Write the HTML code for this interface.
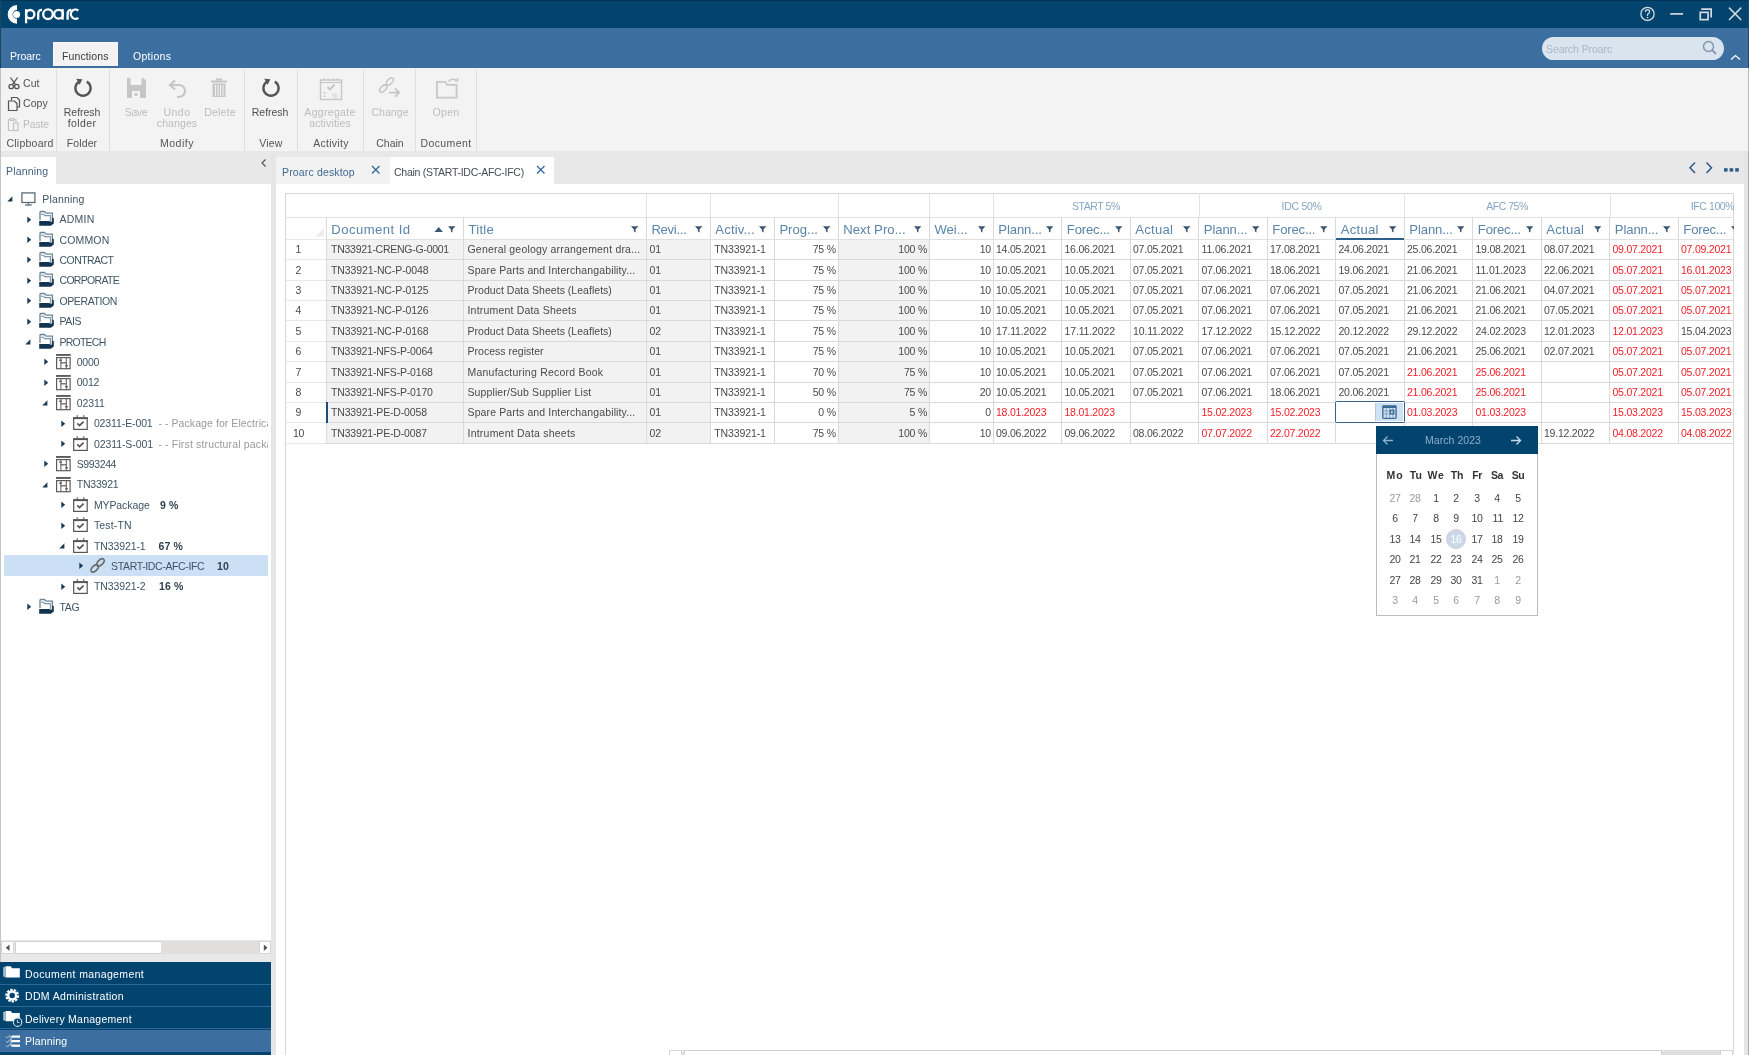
<!DOCTYPE html><html><head><meta charset="utf-8"><style>
html,body{margin:0;padding:0;}
body{width:1749px;height:1055px;overflow:hidden;position:relative;background:#fff;font-family:"Liberation Sans", sans-serif;}
.t{position:absolute;white-space:nowrap;line-height:1;}
body>div,body>svg{will-change:transform;}
.r{position:absolute;}
svg{position:absolute;overflow:visible;}
</style></head><body>
<div class="r" style="left:0px;top:0px;width:1749px;height:28px;background:#03446f;"></div>
<div class="r" style="left:0px;top:0px;width:1749px;height:1px;background:#023456;"></div>
<svg style="left:0;top:0" width="90" height="28">
<path d="M17 5.1 A9.3 9.3 0 0 0 17 23.7 L17 18.8 A4.4 4.4 0 0 1 17 10 Z" fill="#fff"/>
<circle cx="16.6" cy="14.4" r="3.5" fill="#fff"/>
<g fill="none" stroke="#fff" stroke-width="2.3">
<path d="M26.1 9.2 V23.3"/><circle cx="30.2" cy="14.2" r="4.2"/>
<path d="M38.2 19.7 V14.3 Q38.2 9.9 42 9.9"/>
<circle cx="48" cy="14.2" r="4.8"/>
<circle cx="58.6" cy="14.2" r="4.4"/><path d="M62.6 9.1 V19.7"/>
<path d="M67.6 19.7 V14.3 Q67.6 9.9 71.3 9.9"/>
<path d="M78.3 10.6 A4.6 4.6 0 1 0 78.3 17.8"/>
</g>
</svg>
<svg style="left:1636px;top:4px" width="110" height="22">
<g fill="none" stroke="#d3dae1">
<circle cx="11.5" cy="9.9" r="6.6" stroke-width="1.3"/>
<path d="M9.4 7.9 Q9.4 5.7 11.5 5.7 Q13.6 5.7 13.6 7.8 Q13.6 9.3 11.6 10.3 V12" stroke-width="1.2"/>
<line x1="34.2" y1="9.9" x2="47.1" y2="9.9" stroke-width="1.7"/>
<rect x="64.25" y="8.35" width="7.8" height="7.3" stroke-width="1.7"/>
<path d="M65.2 5.15 H75.15 V13.5" stroke-width="1.7"/>
<path d="M93 3.6 L105.2 16 M105.2 3.6 L93 16" stroke-width="1.5"/>
</g>
<circle cx="11.6" cy="13.6" r="0.8" fill="#d3dae1"/>
</svg>
<div class="r" style="left:0px;top:28px;width:1749px;height:40px;background:#3c6f9f;"></div>
<div class="r" style="left:0px;top:0px;width:1px;height:68px;background:#1f4460;"></div>
<div class="r" style="left:53.4px;top:41.8px;width:64.8px;height:24.3px;background:#f2f2f2;border:1px solid #fbf8f6;border-bottom:none;box-sizing:border-box;"></div>
<div class="t" style="left:10.00px;top:50.91px;font-size:10.5px;color:#fff;letter-spacing:-0.022px;">Proarc</div>
<div class="t" style="left:62.40px;top:50.91px;font-size:10.5px;color:#3a3a3a;letter-spacing:0.117px;">Functions</div>
<div class="t" style="left:132.60px;top:50.91px;font-size:10.5px;color:#fff;letter-spacing:0.301px;">Options</div>
<div class="r" style="left:1542px;top:37px;width:182px;height:23px;background:#d9e4ee;border-radius:11.5px;"></div>
<div class="t" style="left:1546.00px;top:43.71px;font-size:10.5px;color:#a8b8c8;letter-spacing:-0.078px;">Search Proarc</div>
<svg style="left:1700px;top:39px" width="20" height="18">
<circle cx="8.5" cy="7.5" r="5" fill="none" stroke="#7f97ae" stroke-width="1.5"/>
<line x1="12" y1="11" x2="16" y2="15" stroke="#7f97ae" stroke-width="1.8"/>
</svg>
<svg style="left:1728px;top:52px" width="16" height="10">
<path d="M3 7.5 L7.5 3.5 L12 7.5" fill="none" stroke="#fff" stroke-width="1.3"/>
</svg>
<div class="r" style="left:0px;top:68px;width:1749px;height:83px;background:#f3f3f3;"></div>
<div class="r" style="left:0px;top:68px;width:1px;height:83px;background:#c2c2c2;"></div>
<div class="r" style="left:55.5px;top:68.5px;width:1px;height:82px;background:#dedede;"></div>
<div class="r" style="left:108.5px;top:68.5px;width:1px;height:82px;background:#dedede;"></div>
<div class="r" style="left:243.5px;top:68.5px;width:1px;height:82px;background:#dedede;"></div>
<div class="r" style="left:296.5px;top:68.5px;width:1px;height:82px;background:#dedede;"></div>
<div class="r" style="left:363px;top:68.5px;width:1px;height:82px;background:#dedede;"></div>
<div class="r" style="left:415px;top:68.5px;width:1px;height:82px;background:#dedede;"></div>
<div class="r" style="left:476px;top:68.5px;width:1px;height:82px;background:#dedede;"></div>
<svg style="left:7px;top:76px" width="16" height="56">
<g fill="none" stroke="#555" stroke-width="1.3">
<circle cx="4.2" cy="10.5" r="2.2"/><circle cx="9.8" cy="10.5" r="2.2"/>
<path d="M5.5 8.6 L10.5 1.5 M8.5 8.6 L3.5 1.5"/>
</g>
<g fill="none" stroke="#555" stroke-width="1.2">
<path d="M4.5 24.5 V21.5 H10 L12.5 24 V31 H10"/>
<path d="M1.5 25 H7.5 L10 27.5 V34.5 H1.5 Z"/>
</g>
<g fill="none" stroke="#c4c4c4" stroke-width="1.2">
<path d="M3 43.5 H1.5 V54.5 H6"/><path d="M7.5 43.5 H9 V46"/><rect x="3.5" y="42.5" width="3.5" height="2"/>
<rect x="6.5" y="47" width="4.5" height="7.5"/>
</g>
</svg>
<div class="t" style="left:23.00px;top:78.31px;font-size:10.5px;color:#505050;letter-spacing:0.1px;">Cut</div>
<div class="t" style="left:23.00px;top:97.91px;font-size:10.5px;color:#505050;letter-spacing:0.094px;">Copy</div>
<div class="t" style="left:23.00px;top:118.51px;font-size:10.5px;color:#bcbcbc;letter-spacing:-0.208px;">Paste</div>
<div class="t" style="left:-270.38px;width:600px;text-align:center;top:138.41px;font-size:10.5px;color:#555;letter-spacing:0.237px;">Clipboard</div>
<svg style="left:73px;top:78px" width="20" height="20">
<path d="M6.2 3.6 A7.6 7.6 0 1 0 13.8 3.6" fill="none" stroke="#555" stroke-width="2.4"/>
<path d="M3.2 0.8 L9.4 1.2 L6.6 6.8 Z" fill="#555"/>
</svg>
<div class="t" style="left:-218.03px;width:600px;text-align:center;top:106.61px;font-size:10.5px;color:#505050;letter-spacing:-0.065px;">Refresh</div>
<div class="t" style="left:-217.80px;width:600px;text-align:center;top:118.11px;font-size:10.5px;color:#505050;letter-spacing:0.408px;">folder</div>
<div class="t" style="left:-217.95px;width:600px;text-align:center;top:138.41px;font-size:10.5px;color:#555;letter-spacing:0.091px;">Folder</div>
<svg style="left:126px;top:77px" width="22" height="22">
<path d="M1 1 H17.5 L20 3.5 V21 H1 Z" fill="#c6c6c6"/>
<rect x="4.5" y="1" width="11" height="7" fill="#f3f3f3"/>
<rect x="6" y="14" width="8" height="7" fill="#f3f3f3"/>
<rect x="8.5" y="16" width="3" height="3" fill="#c6c6c6"/>
</svg>
<div class="t" style="left:-163.68px;width:600px;text-align:center;top:106.61px;font-size:10.5px;color:#bcbcbc;letter-spacing:-0.364px;">Save</div>
<svg style="left:167px;top:79px" width="22" height="20">
<path d="M4 6 H12 A6 6 0 0 1 12 18 H10" fill="none" stroke="#c6c6c6" stroke-width="2.2"/>
<path d="M8 1.5 L3 6 L8 10.5" fill="none" stroke="#c6c6c6" stroke-width="2.2"/>
</svg>
<div class="t" style="left:-122.78px;width:600px;text-align:center;top:106.61px;font-size:10.5px;color:#bcbcbc;letter-spacing:0.431px;">Undo</div>
<div class="t" style="left:-122.95px;width:600px;text-align:center;top:118.11px;font-size:10.5px;color:#bcbcbc;letter-spacing:0.093px;">changes</div>
<svg style="left:210px;top:78px" width="20" height="20">
<rect x="1" y="2.5" width="16" height="2" fill="#c6c6c6"/>
<rect x="6" y="0.5" width="6" height="2" fill="#c6c6c6"/>
<path d="M2.5 5.5 H15.5 V19 H2.5 Z" fill="#c6c6c6"/>
<g stroke="#f3f3f3" stroke-width="1"><line x1="5.5" y1="7" x2="5.5" y2="18"/><line x1="8" y1="7" x2="8" y2="18"/><line x1="10.5" y1="7" x2="10.5" y2="18"/><line x1="13" y1="7" x2="13" y2="18"/></g>
</svg>
<div class="t" style="left:-80.41px;width:600px;text-align:center;top:106.61px;font-size:10.5px;color:#bcbcbc;letter-spacing:0.186px;">Delete</div>
<div class="t" style="left:-122.75px;width:600px;text-align:center;top:138.41px;font-size:10.5px;color:#555;letter-spacing:0.502px;">Modify</div>
<svg style="left:261px;top:78px" width="20" height="20">
<path d="M6.2 3.6 A7.6 7.6 0 1 0 13.8 3.6" fill="none" stroke="#555" stroke-width="2.4"/>
<path d="M3.2 0.8 L9.4 1.2 L6.6 6.8 Z" fill="#555"/>
</svg>
<div class="t" style="left:-29.53px;width:600px;text-align:center;top:106.61px;font-size:10.5px;color:#505050;letter-spacing:-0.065px;">Refresh</div>
<div class="t" style="left:-29.41px;width:600px;text-align:center;top:138.41px;font-size:10.5px;color:#555;letter-spacing:0.171px;">View</div>
<svg style="left:319px;top:77px" width="24" height="24">
<rect x="1.5" y="3" width="21" height="19.5" fill="none" stroke="#c6c6c6" stroke-width="1.4"/>
<line x1="1.5" y1="5.5" x2="22.5" y2="5.5" stroke="#c6c6c6" stroke-width="1.2"/>
<g stroke="#c6c6c6" stroke-width="1"><line x1="5" y1="1" x2="5" y2="3"/><line x1="9" y1="1" x2="9" y2="3"/><line x1="14" y1="1" x2="14" y2="3"/><line x1="18" y1="1" x2="18" y2="3"/></g>
<path d="M8.5 10 L11 12.5 L15.5 7.5" fill="none" stroke="#c6c6c6" stroke-width="2"/>
<text x="3.5" y="20" font-size="7" font-family="Liberation Sans" fill="#c6c6c6">Σ</text>
<text x="13" y="20.5" font-size="6.5" font-family="Liberation Sans" fill="#c6c6c6">%</text>
</svg>
<div class="t" style="left:30.16px;width:600px;text-align:center;top:106.61px;font-size:10.5px;color:#bcbcbc;letter-spacing:0.314px;">Aggregate</div>
<div class="t" style="left:30.07px;width:600px;text-align:center;top:118.11px;font-size:10.5px;color:#bcbcbc;letter-spacing:0.142px;">activities</div>
<div class="t" style="left:31.13px;width:600px;text-align:center;top:138.41px;font-size:10.5px;color:#555;letter-spacing:0.254px;">Activity</div>
<svg style="left:378px;top:76px" width="24" height="24">
<g fill="none" stroke="#c6c6c6" stroke-width="1.5">
<ellipse cx="5.2" cy="12.6" rx="4.4" ry="2.4" transform="rotate(-45 5.2 12.6)"/>
<ellipse cx="11.9" cy="5.5" rx="4.4" ry="2.4" transform="rotate(-45 11.9 5.5)"/>
<path d="M11 16.6 H21 M17 12.4 L21.2 16.6 L17 20.8" stroke-width="1.7"/>
</g>
</svg>
<div class="t" style="left:90.04px;width:600px;text-align:center;top:106.61px;font-size:10.5px;color:#bcbcbc;letter-spacing:0.074px;">Change</div>
<div class="t" style="left:89.50px;width:600px;text-align:center;top:138.41px;font-size:10.5px;color:#555;letter-spacing:-0.003px;">Chain</div>
<svg style="left:435px;top:76px" width="26" height="24">
<path d="M1.9 5.9 H10.2 L12.3 8.9 H21.6 V21.7 H1.9 Z" fill="none" stroke="#c8c8c8" stroke-width="1.8"/>
<path d="M13.6 5.6 A5.2 4.2 0 0 1 22.2 4.6" fill="none" stroke="#c8c8c8" stroke-width="1.4"/>
<path d="M19.6 4.9 L22.6 4.9 L22.6 2.1" fill="none" stroke="#c8c8c8" stroke-width="1.4"/>
</svg>
<div class="t" style="left:146.14px;width:600px;text-align:center;top:106.61px;font-size:10.5px;color:#bcbcbc;letter-spacing:0.279px;">Open</div>
<div class="t" style="left:146.20px;width:600px;text-align:center;top:138.41px;font-size:10.5px;color:#555;letter-spacing:0.402px;">Document</div>
<div class="r" style="left:0px;top:151px;width:271px;height:33px;background:#e8e8e8;"></div>
<div class="r" style="left:1px;top:157px;width:55px;height:27px;background:#ffffff;"></div>
<div class="t" style="left:6.00px;top:165.71px;font-size:10.5px;color:#41617f;letter-spacing:0.17px;">Planning</div>
<svg style="left:259px;top:157px" width="10" height="12">
<path d="M6.5 2.5 L3 6 L6.5 9.5" fill="none" stroke="#555" stroke-width="1.2"/>
</svg>
<div class="r" style="left:1px;top:184px;width:270px;height:756px;background:#ffffff;"></div>
<div class="r" style="left:0px;top:151px;width:1px;height:904px;background:#c4c4c4;"></div>
<div class="r" style="left:271px;top:151px;width:5px;height:904px;background:#e6e6e6;"></div>
<div class="r" style="left:4px;top:555px;width:263.5px;height:20.7px;background:#cbe0f4;"></div>
<div style="position:absolute;left:0px;top:184px;width:268px;height:756px;overflow:hidden">
<svg style="left:6.699999999999999px;top:11.999999999999995px" width="7" height="7"><path d="M5.4 0.3 L5.4 5.4 L0.3 5.4 Z" fill="#1b3a52"/></svg>
<svg style="left:20.599999999999998px;top:7.999999999999995px" width="16" height="15"><g fill="none" stroke="#5d6d79" stroke-width="1.3">
<rect x="0.9" y="0.9" width="13" height="9.6"/><line x1="7.4" y1="10.5" x2="7.4" y2="12.6"/><line x1="4" y1="13" x2="10.8" y2="13"/></g></svg>
<div class="t" style="left:42.30px;top:9.71px;font-size:10.5px;color:#3e5465;letter-spacing:0.17px;">Planning</div>
<svg style="left:27.0px;top:31.5px" width="6" height="8"><path d="M0.3 0.5 L4.2 3.8 L0.3 7.1 Z" fill="#1b3a52"/></svg>
<svg style="left:38.8px;top:27.1px" width="16" height="16">
<path d="M1 9 V1.3 Q1 0.5 1.8 0.5 H5.4 L7.1 2.2 H13.4 V10.5" fill="none" stroke="#6a8498" stroke-width="1.3"/>
<path d="M1.9 3.3 H4.7 L5.7 4.6 H11.4 V10.8" fill="none" stroke="#7f95a6" stroke-width="1.1"/>
<path d="M0.2 10.1 H10.3 L11.6 11.1 L13.2 10.3 V6.6 L14.8 7.2 V12.6 L11.9 14.8 H0.2 Z" fill="#12334f"/>
</svg>
<div class="t" style="left:59.50px;top:30.11px;font-size:10.5px;color:#3e5465;letter-spacing:0.222px;">ADMIN</div>
<svg style="left:27.0px;top:51.89999999999998px" width="6" height="8"><path d="M0.3 0.5 L4.2 3.8 L0.3 7.1 Z" fill="#1b3a52"/></svg>
<svg style="left:38.8px;top:47.49999999999998px" width="16" height="16">
<path d="M1 9 V1.3 Q1 0.5 1.8 0.5 H5.4 L7.1 2.2 H13.4 V10.5" fill="none" stroke="#6a8498" stroke-width="1.3"/>
<path d="M1.9 3.3 H4.7 L5.7 4.6 H11.4 V10.8" fill="none" stroke="#7f95a6" stroke-width="1.1"/>
<path d="M0.2 10.1 H10.3 L11.6 11.1 L13.2 10.3 V6.6 L14.8 7.2 V12.6 L11.9 14.8 H0.2 Z" fill="#12334f"/>
</svg>
<div class="t" style="left:59.50px;top:50.51px;font-size:10.5px;color:#3e5465;letter-spacing:0.156px;">COMMON</div>
<svg style="left:27.0px;top:72.30000000000001px" width="6" height="8"><path d="M0.3 0.5 L4.2 3.8 L0.3 7.1 Z" fill="#1b3a52"/></svg>
<svg style="left:38.8px;top:67.9px" width="16" height="16">
<path d="M1 9 V1.3 Q1 0.5 1.8 0.5 H5.4 L7.1 2.2 H13.4 V10.5" fill="none" stroke="#6a8498" stroke-width="1.3"/>
<path d="M1.9 3.3 H4.7 L5.7 4.6 H11.4 V10.8" fill="none" stroke="#7f95a6" stroke-width="1.1"/>
<path d="M0.2 10.1 H10.3 L11.6 11.1 L13.2 10.3 V6.6 L14.8 7.2 V12.6 L11.9 14.8 H0.2 Z" fill="#12334f"/>
</svg>
<div class="t" style="left:59.50px;top:70.91px;font-size:10.5px;color:#3e5465;letter-spacing:-0.55px;">CONTRACT</div>
<svg style="left:27.0px;top:92.69999999999999px" width="6" height="8"><path d="M0.3 0.5 L4.2 3.8 L0.3 7.1 Z" fill="#1b3a52"/></svg>
<svg style="left:38.8px;top:88.29999999999998px" width="16" height="16">
<path d="M1 9 V1.3 Q1 0.5 1.8 0.5 H5.4 L7.1 2.2 H13.4 V10.5" fill="none" stroke="#6a8498" stroke-width="1.3"/>
<path d="M1.9 3.3 H4.7 L5.7 4.6 H11.4 V10.8" fill="none" stroke="#7f95a6" stroke-width="1.1"/>
<path d="M0.2 10.1 H10.3 L11.6 11.1 L13.2 10.3 V6.6 L14.8 7.2 V12.6 L11.9 14.8 H0.2 Z" fill="#12334f"/>
</svg>
<div class="t" style="left:59.50px;top:91.31px;font-size:10.5px;color:#3e5465;letter-spacing:-0.698px;">CORPORATE</div>
<svg style="left:27.0px;top:113.10000000000002px" width="6" height="8"><path d="M0.3 0.5 L4.2 3.8 L0.3 7.1 Z" fill="#1b3a52"/></svg>
<svg style="left:38.8px;top:108.70000000000002px" width="16" height="16">
<path d="M1 9 V1.3 Q1 0.5 1.8 0.5 H5.4 L7.1 2.2 H13.4 V10.5" fill="none" stroke="#6a8498" stroke-width="1.3"/>
<path d="M1.9 3.3 H4.7 L5.7 4.6 H11.4 V10.8" fill="none" stroke="#7f95a6" stroke-width="1.1"/>
<path d="M0.2 10.1 H10.3 L11.6 11.1 L13.2 10.3 V6.6 L14.8 7.2 V12.6 L11.9 14.8 H0.2 Z" fill="#12334f"/>
</svg>
<div class="t" style="left:59.50px;top:111.71px;font-size:10.5px;color:#3e5465;letter-spacing:-0.404px;">OPERATION</div>
<svg style="left:27.0px;top:133.5px" width="6" height="8"><path d="M0.3 0.5 L4.2 3.8 L0.3 7.1 Z" fill="#1b3a52"/></svg>
<svg style="left:38.8px;top:129.1px" width="16" height="16">
<path d="M1 9 V1.3 Q1 0.5 1.8 0.5 H5.4 L7.1 2.2 H13.4 V10.5" fill="none" stroke="#6a8498" stroke-width="1.3"/>
<path d="M1.9 3.3 H4.7 L5.7 4.6 H11.4 V10.8" fill="none" stroke="#7f95a6" stroke-width="1.1"/>
<path d="M0.2 10.1 H10.3 L11.6 11.1 L13.2 10.3 V6.6 L14.8 7.2 V12.6 L11.9 14.8 H0.2 Z" fill="#12334f"/>
</svg>
<div class="t" style="left:59.50px;top:132.11px;font-size:10.5px;color:#3e5465;letter-spacing:-0.422px;">PAIS</div>
<svg style="left:24.9px;top:154.79999999999998px" width="7" height="7"><path d="M5.4 0.3 L5.4 5.4 L0.3 5.4 Z" fill="#1b3a52"/></svg>
<svg style="left:38.8px;top:149.49999999999997px" width="16" height="16">
<path d="M1 9 V1.3 Q1 0.5 1.8 0.5 H5.4 L7.1 2.2 H13.4 V10.5" fill="none" stroke="#6a8498" stroke-width="1.3"/>
<path d="M1.9 3.3 H4.7 L5.7 4.6 H11.4 V10.8" fill="none" stroke="#7f95a6" stroke-width="1.1"/>
<path d="M0.2 10.1 H10.3 L11.6 11.1 L13.2 10.3 V6.6 L14.8 7.2 V12.6 L11.9 14.8 H0.2 Z" fill="#12334f"/>
</svg>
<div class="t" style="left:59.50px;top:152.51px;font-size:10.5px;color:#3e5465;letter-spacing:-0.771px;">PROTECH</div>
<svg style="left:44.2px;top:174.29999999999995px" width="6" height="8"><path d="M0.3 0.5 L4.2 3.8 L0.3 7.1 Z" fill="#1b3a52"/></svg>
<svg style="left:56.0px;top:170.09999999999997px" width="16" height="16">
<rect x="0" y="0" width="14.7" height="1.9" fill="#5c5c5c"/>
<rect x="0.6" y="3.6" width="13.5" height="11.1" fill="none" stroke="#5c5c5c" stroke-width="1.2"/>
<line x1="4.9" y1="3.6" x2="4.9" y2="14.7" stroke="#5c5c5c" stroke-width="1"/>
<line x1="10.3" y1="3.6" x2="10.3" y2="14.7" stroke="#5c5c5c" stroke-width="1"/>
<g stroke="#5c5c5c" stroke-width="1.2"><line x1="3" y1="6.2" x2="6" y2="6.2"/><line x1="4.5" y1="8.8" x2="10.5" y2="8.8"/><line x1="9" y1="11.8" x2="12" y2="11.8"/></g>
</svg>
<div class="t" style="left:76.70px;top:172.91px;font-size:10.5px;color:#3e5465;letter-spacing:-0.217px;">0000</div>
<svg style="left:44.2px;top:194.7px" width="6" height="8"><path d="M0.3 0.5 L4.2 3.8 L0.3 7.1 Z" fill="#1b3a52"/></svg>
<svg style="left:56.0px;top:190.5px" width="16" height="16">
<rect x="0" y="0" width="14.7" height="1.9" fill="#5c5c5c"/>
<rect x="0.6" y="3.6" width="13.5" height="11.1" fill="none" stroke="#5c5c5c" stroke-width="1.2"/>
<line x1="4.9" y1="3.6" x2="4.9" y2="14.7" stroke="#5c5c5c" stroke-width="1"/>
<line x1="10.3" y1="3.6" x2="10.3" y2="14.7" stroke="#5c5c5c" stroke-width="1"/>
<g stroke="#5c5c5c" stroke-width="1.2"><line x1="3" y1="6.2" x2="6" y2="6.2"/><line x1="4.5" y1="8.8" x2="10.5" y2="8.8"/><line x1="9" y1="11.8" x2="12" y2="11.8"/></g>
</svg>
<div class="t" style="left:76.70px;top:193.31px;font-size:10.5px;color:#3e5465;letter-spacing:-0.217px;">0012</div>
<svg style="left:42.099999999999994px;top:216.00000000000003px" width="7" height="7"><path d="M5.4 0.3 L5.4 5.4 L0.3 5.4 Z" fill="#1b3a52"/></svg>
<svg style="left:56.0px;top:210.90000000000003px" width="16" height="16">
<rect x="0" y="0" width="14.7" height="1.9" fill="#5c5c5c"/>
<rect x="0.6" y="3.6" width="13.5" height="11.1" fill="none" stroke="#5c5c5c" stroke-width="1.2"/>
<line x1="4.9" y1="3.6" x2="4.9" y2="14.7" stroke="#5c5c5c" stroke-width="1"/>
<line x1="10.3" y1="3.6" x2="10.3" y2="14.7" stroke="#5c5c5c" stroke-width="1"/>
<g stroke="#5c5c5c" stroke-width="1.2"><line x1="3" y1="6.2" x2="6" y2="6.2"/><line x1="4.5" y1="8.8" x2="10.5" y2="8.8"/><line x1="9" y1="11.8" x2="12" y2="11.8"/></g>
</svg>
<div class="t" style="left:76.70px;top:213.71px;font-size:10.5px;color:#3e5465;letter-spacing:-0.061px;">02311</div>
<svg style="left:61.4px;top:235.5px" width="6" height="8"><path d="M0.3 0.5 L4.2 3.8 L0.3 7.1 Z" fill="#1b3a52"/></svg>
<svg style="left:73.19999999999999px;top:231.4px" width="16" height="16">
<rect x="0.7" y="2.9" width="13.5" height="11.5" fill="none" stroke="#555" stroke-width="1.2"/>
<rect x="0.1" y="2.3" width="14.7" height="1.8" fill="#555"/>
<g stroke="#555" stroke-width="1"><line x1="4.2" y1="0.1" x2="4.2" y2="2.5"/><line x1="10.8" y1="0.1" x2="10.8" y2="2.5"/></g>
<path d="M4.3 8.4 L6.5 10.6 L10.6 6.6" fill="none" stroke="#555" stroke-width="1.7"/>
</svg>
<div class="t" style="left:93.90px;top:234.11px;font-size:10.5px;color:#3e5465;letter-spacing:-0.112px;">02311-E-001</div>
<div class="t" style="left:158.40px;top:234.11px;font-size:10.5px;color:#9a9a9a;letter-spacing:0.075px;">- - Package for Electrical</div>
<svg style="left:61.4px;top:255.89999999999998px" width="6" height="8"><path d="M0.3 0.5 L4.2 3.8 L0.3 7.1 Z" fill="#1b3a52"/></svg>
<svg style="left:73.19999999999999px;top:251.79999999999998px" width="16" height="16">
<rect x="0.7" y="2.9" width="13.5" height="11.5" fill="none" stroke="#555" stroke-width="1.2"/>
<rect x="0.1" y="2.3" width="14.7" height="1.8" fill="#555"/>
<g stroke="#555" stroke-width="1"><line x1="4.2" y1="0.1" x2="4.2" y2="2.5"/><line x1="10.8" y1="0.1" x2="10.8" y2="2.5"/></g>
<path d="M4.3 8.4 L6.5 10.6 L10.6 6.6" fill="none" stroke="#555" stroke-width="1.7"/>
</svg>
<div class="t" style="left:93.90px;top:254.51px;font-size:10.5px;color:#3e5465;letter-spacing:-0.083px;">02311-S-001</div>
<div class="t" style="left:158.40px;top:254.51px;font-size:10.5px;color:#9a9a9a;letter-spacing:0.149px;">- - First structural package</div>
<svg style="left:44.2px;top:276.29999999999995px" width="6" height="8"><path d="M0.3 0.5 L4.2 3.8 L0.3 7.1 Z" fill="#1b3a52"/></svg>
<svg style="left:56.0px;top:272.09999999999997px" width="16" height="16">
<rect x="0" y="0" width="14.7" height="1.9" fill="#5c5c5c"/>
<rect x="0.6" y="3.6" width="13.5" height="11.1" fill="none" stroke="#5c5c5c" stroke-width="1.2"/>
<line x1="4.9" y1="3.6" x2="4.9" y2="14.7" stroke="#5c5c5c" stroke-width="1"/>
<line x1="10.3" y1="3.6" x2="10.3" y2="14.7" stroke="#5c5c5c" stroke-width="1"/>
<g stroke="#5c5c5c" stroke-width="1.2"><line x1="3" y1="6.2" x2="6" y2="6.2"/><line x1="4.5" y1="8.8" x2="10.5" y2="8.8"/><line x1="9" y1="11.8" x2="12" y2="11.8"/></g>
</svg>
<div class="t" style="left:76.70px;top:274.91px;font-size:10.5px;color:#3e5465;letter-spacing:-0.379px;">S993244</div>
<svg style="left:42.099999999999994px;top:297.5999999999999px" width="7" height="7"><path d="M5.4 0.3 L5.4 5.4 L0.3 5.4 Z" fill="#1b3a52"/></svg>
<svg style="left:56.0px;top:292.49999999999994px" width="16" height="16">
<rect x="0" y="0" width="14.7" height="1.9" fill="#5c5c5c"/>
<rect x="0.6" y="3.6" width="13.5" height="11.1" fill="none" stroke="#5c5c5c" stroke-width="1.2"/>
<line x1="4.9" y1="3.6" x2="4.9" y2="14.7" stroke="#5c5c5c" stroke-width="1"/>
<line x1="10.3" y1="3.6" x2="10.3" y2="14.7" stroke="#5c5c5c" stroke-width="1"/>
<g stroke="#5c5c5c" stroke-width="1.2"><line x1="3" y1="6.2" x2="6" y2="6.2"/><line x1="4.5" y1="8.8" x2="10.5" y2="8.8"/><line x1="9" y1="11.8" x2="12" y2="11.8"/></g>
</svg>
<div class="t" style="left:76.70px;top:295.31px;font-size:10.5px;color:#3e5465;letter-spacing:-0.197px;">TN33921</div>
<svg style="left:61.4px;top:317.1px" width="6" height="8"><path d="M0.3 0.5 L4.2 3.8 L0.3 7.1 Z" fill="#1b3a52"/></svg>
<svg style="left:73.19999999999999px;top:313.0px" width="16" height="16">
<rect x="0.7" y="2.9" width="13.5" height="11.5" fill="none" stroke="#555" stroke-width="1.2"/>
<rect x="0.1" y="2.3" width="14.7" height="1.8" fill="#555"/>
<g stroke="#555" stroke-width="1"><line x1="4.2" y1="0.1" x2="4.2" y2="2.5"/><line x1="10.8" y1="0.1" x2="10.8" y2="2.5"/></g>
<path d="M4.3 8.4 L6.5 10.6 L10.6 6.6" fill="none" stroke="#555" stroke-width="1.7"/>
</svg>
<div class="t" style="left:93.90px;top:315.71px;font-size:10.5px;color:#3e5465;letter-spacing:-0.09px;">MYPackage</div>
<div class="t" style="left:160.00px;top:315.71px;font-size:10.5px;color:#2e3f4d;letter-spacing:0.155px;font-weight:700;">9 %</div>
<svg style="left:61.4px;top:337.5px" width="6" height="8"><path d="M0.3 0.5 L4.2 3.8 L0.3 7.1 Z" fill="#1b3a52"/></svg>
<svg style="left:73.19999999999999px;top:333.4px" width="16" height="16">
<rect x="0.7" y="2.9" width="13.5" height="11.5" fill="none" stroke="#555" stroke-width="1.2"/>
<rect x="0.1" y="2.3" width="14.7" height="1.8" fill="#555"/>
<g stroke="#555" stroke-width="1"><line x1="4.2" y1="0.1" x2="4.2" y2="2.5"/><line x1="10.8" y1="0.1" x2="10.8" y2="2.5"/></g>
<path d="M4.3 8.4 L6.5 10.6 L10.6 6.6" fill="none" stroke="#555" stroke-width="1.7"/>
</svg>
<div class="t" style="left:93.90px;top:336.11px;font-size:10.5px;color:#3e5465;letter-spacing:0.149px;">Test-TN</div>
<svg style="left:59.3px;top:358.79999999999995px" width="7" height="7"><path d="M5.4 0.3 L5.4 5.4 L0.3 5.4 Z" fill="#1b3a52"/></svg>
<svg style="left:73.19999999999999px;top:353.79999999999995px" width="16" height="16">
<rect x="0.7" y="2.9" width="13.5" height="11.5" fill="none" stroke="#555" stroke-width="1.2"/>
<rect x="0.1" y="2.3" width="14.7" height="1.8" fill="#555"/>
<g stroke="#555" stroke-width="1"><line x1="4.2" y1="0.1" x2="4.2" y2="2.5"/><line x1="10.8" y1="0.1" x2="10.8" y2="2.5"/></g>
<path d="M4.3 8.4 L6.5 10.6 L10.6 6.6" fill="none" stroke="#555" stroke-width="1.7"/>
</svg>
<div class="t" style="left:93.90px;top:356.51px;font-size:10.5px;color:#3e5465;letter-spacing:-0.099px;">TN33921-1</div>
<div class="t" style="left:158.50px;top:356.51px;font-size:10.5px;color:#2e3f4d;letter-spacing:0.146px;font-weight:700;">67 %</div>
<svg style="left:78.6px;top:378.29999999999995px" width="6" height="8"><path d="M0.3 0.5 L4.2 3.8 L0.3 7.1 Z" fill="#1b3a52"/></svg>
<svg style="left:90.39999999999999px;top:373.99999999999994px" width="16" height="16"><g fill="none" stroke="#6a6a6a" stroke-width="1.55">
<ellipse cx="4.7" cy="10.4" rx="4.5" ry="2.5" transform="rotate(-45 4.7 10.4)"/>
<ellipse cx="10.5" cy="4.4" rx="4.5" ry="2.5" transform="rotate(-45 10.5 4.4)"/>
</g></svg>
<div class="t" style="left:111.10px;top:376.91px;font-size:10.5px;color:#3e5465;letter-spacing:-0.365px;">START-IDC-AFC-IFC</div>
<div class="t" style="left:217.00px;top:376.91px;font-size:10.5px;color:#2e3f4d;letter-spacing:0.117px;font-weight:700;">10</div>
<svg style="left:61.4px;top:398.69999999999993px" width="6" height="8"><path d="M0.3 0.5 L4.2 3.8 L0.3 7.1 Z" fill="#1b3a52"/></svg>
<svg style="left:73.19999999999999px;top:394.5999999999999px" width="16" height="16">
<rect x="0.7" y="2.9" width="13.5" height="11.5" fill="none" stroke="#555" stroke-width="1.2"/>
<rect x="0.1" y="2.3" width="14.7" height="1.8" fill="#555"/>
<g stroke="#555" stroke-width="1"><line x1="4.2" y1="0.1" x2="4.2" y2="2.5"/><line x1="10.8" y1="0.1" x2="10.8" y2="2.5"/></g>
<path d="M4.3 8.4 L6.5 10.6 L10.6 6.6" fill="none" stroke="#555" stroke-width="1.7"/>
</svg>
<div class="t" style="left:93.90px;top:397.31px;font-size:10.5px;color:#3e5465;letter-spacing:-0.099px;">TN33921-2</div>
<div class="t" style="left:159.00px;top:397.31px;font-size:10.5px;color:#2e3f4d;letter-spacing:0.146px;font-weight:700;">16 %</div>
<svg style="left:27.0px;top:419.1px" width="6" height="8"><path d="M0.3 0.5 L4.2 3.8 L0.3 7.1 Z" fill="#1b3a52"/></svg>
<svg style="left:38.8px;top:414.70000000000005px" width="16" height="16">
<path d="M1 9 V1.3 Q1 0.5 1.8 0.5 H5.4 L7.1 2.2 H13.4 V10.5" fill="none" stroke="#6a8498" stroke-width="1.3"/>
<path d="M1.9 3.3 H4.7 L5.7 4.6 H11.4 V10.8" fill="none" stroke="#7f95a6" stroke-width="1.1"/>
<path d="M0.2 10.1 H10.3 L11.6 11.1 L13.2 10.3 V6.6 L14.8 7.2 V12.6 L11.9 14.8 H0.2 Z" fill="#12334f"/>
</svg>
<div class="t" style="left:59.50px;top:417.71px;font-size:10.5px;color:#3e5465;letter-spacing:-0.269px;">TAG</div>
</div>
<div class="r" style="left:1px;top:940px;width:270px;height:13px;background:#e8e8e8;"></div>
<div class="r" style="left:1px;top:940.5px;width:12.5px;height:13.3px;background:#fff;border:1px solid #d6d6d6;box-sizing:border-box;"></div>
<svg style="left:4.5px;top:943.6px" width="6" height="8"><path d="M4.5 0.5 L0.8 3.8 L4.5 7.1 Z" fill="#555"/></svg>
<div class="r" style="left:14.5px;top:940.6px;width:146.5px;height:13.2px;background:#fff;border:1px solid #d0d0d0;box-sizing:border-box;"></div>
<div class="r" style="left:161px;top:940.6px;width:98px;height:13.2px;background:#e1dfdd;"></div>
<div class="r" style="left:259px;top:940.5px;width:12px;height:13.3px;background:#fff;border:1px solid #d6d6d6;box-sizing:border-box;"></div>
<svg style="left:263px;top:943.6px" width="6" height="8"><path d="M0.8 0.5 L4.5 3.8 L0.8 7.1 Z" fill="#555"/></svg>
<div class="r" style="left:1px;top:953.8px;width:270px;height:8.2px;background:#e8e8e8;"></div>
<div class="r" style="left:0px;top:962px;width:271px;height:93px;background:#03446f;"></div>
<div class="r" style="left:0px;top:983.8px;width:271px;height:1.2px;background:#2f6794;"></div>
<div class="r" style="left:0px;top:1006px;width:271px;height:1.2px;background:#2f6794;"></div>
<div class="r" style="left:0px;top:1028.4px;width:271px;height:1.2px;background:#2f6794;"></div>
<div class="r" style="left:0px;top:1029.6px;width:271px;height:22px;background:#3c6f9f;"></div>
<div class="t" style="left:25.00px;top:968.61px;font-size:10.5px;color:#fff;letter-spacing:0.374px;">Document management</div>
<div class="t" style="left:25.00px;top:991.11px;font-size:10.5px;color:#fff;letter-spacing:0.344px;">DDM Administration</div>
<div class="t" style="left:25.00px;top:1013.61px;font-size:10.5px;color:#fff;letter-spacing:0.25px;">Delivery Management</div>
<div class="t" style="left:25.00px;top:1036.11px;font-size:10.5px;color:#fff;letter-spacing:0.17px;">Planning</div>
<svg style="left:2px;top:962px" width="22" height="93">
<path d="M3.5 4.3 V15.6 H17.8 V6.3 H10.2 L8.6 4.3 Z" fill="#fff"/><path d="M1.2 5.2 V14.8 H3.5 V4.8 Z" fill="#a9c0d6"/>
<g transform="translate(10.2,33.6)"><circle r="5.6" fill="none" stroke="#fff" stroke-width="2.6" stroke-dasharray="2.3 1.1"/><circle r="3.9" fill="none" stroke="#fff" stroke-width="2.3"/></g>
<path d="M3.5 49 V59.3 H17.8 V51 H10.2 L8.6 49 Z" fill="#fff"/><path d="M1.2 49.9 V58.6 H3.5 V49.4 Z" fill="#a9c0d6"/>
<circle cx="15.6" cy="60.2" r="4.2" fill="#03446f" stroke="#d7e2ec" stroke-width="1.1"/><path d="M15.4 57.8 V60.5 H17.6" fill="none" stroke="#d7e2ec" stroke-width="0.9"/>
<g fill="#fff"><rect x="9.5" y="73.5" width="8.5" height="2.2"/><rect x="9.5" y="78" width="8.5" height="2.2"/><rect x="9.5" y="82.6" width="8.5" height="2.2"/></g>
<g stroke="#fff" stroke-width="0.8"><line x1="9" y1="74" x2="9" y2="84"/></g>
<g fill="none" stroke="#c9d8e6" stroke-width="0.9"><path d="M4 74.5 L5.5 76 L8 73"/><path d="M4 79 L5.5 80.5 L8 77.5"/><path d="M4 83.5 L5.5 85 L8 82"/></g>
</svg>
<div class="r" style="left:276px;top:151px;width:1473px;height:33px;background:#e8e8e8;"></div>
<div class="r" style="left:276px;top:157px;width:114px;height:27px;background:#f2f2f2;"></div>
<div class="r" style="left:390px;top:157px;width:164px;height:27px;background:#ffffff;"></div>
<div class="t" style="left:281.50px;top:166.81px;font-size:10.5px;color:#41698f;letter-spacing:0.157px;">Proarc desktop</div>
<div class="t" style="left:394.00px;top:166.81px;font-size:10.5px;color:#454d55;letter-spacing:-0.272px;">Chain (START-IDC-AFC-IFC)</div>
<svg style="left:370px;top:164px" width="12" height="12"><path d="M2 2 L9.5 9.5 M9.5 2 L2 9.5" stroke="#35689a" stroke-width="1.25"/></svg>
<svg style="left:535px;top:164px" width="12" height="12"><path d="M2 2 L9.5 9.5 M9.5 2 L2 9.5" stroke="#35689a" stroke-width="1.25"/></svg>
<svg style="left:1684px;top:160px" width="60" height="16">
<path d="M11 2.5 L6 7.8 L11 13" fill="none" stroke="#2b5a85" stroke-width="1.5"/>
<path d="M22.5 2.5 L27.5 7.8 L22.5 13" fill="none" stroke="#2b5a85" stroke-width="1.5"/>
<rect x="40" y="8.2" width="3.6" height="3.4" fill="#2b5a85"/><rect x="45.6" y="8.2" width="3.6" height="3.4" fill="#2b5a85"/><rect x="51.2" y="8.2" width="3.6" height="3.4" fill="#2b5a85"/>
</svg>
<div class="r" style="left:276px;top:184px;width:1468px;height:871px;background:#ffffff;"></div>
<div class="r" style="left:1744px;top:151px;width:5px;height:904px;background:#e6e6e6;"></div>
<div class="r" style="left:1747.6px;top:151px;width:1.4px;height:904px;background:#a9a9a9;"></div>
<div class="r" style="left:1748px;top:0px;width:1px;height:68px;background:#234a6a;"></div>
<div class="r" style="left:1748px;top:68px;width:1px;height:83px;background:#b9b9b9;"></div>
<div style="position:absolute;left:0;top:0;width:1733.5px;height:1055px;overflow:hidden">
<div class="r" style="left:326.3px;top:239.2px;width:137.2px;height:204.0px;background:#f2f2f2;"></div>
<div class="r" style="left:463.5px;top:239.2px;width:182.89999999999998px;height:204.0px;background:#f2f2f2;"></div>
<div class="r" style="left:646.4px;top:239.2px;width:63.89999999999998px;height:204.0px;background:#f2f2f2;"></div>
<div class="r" style="left:838.2px;top:239.2px;width:91.29999999999995px;height:204.0px;background:#f2f2f2;"></div>
<div class="r" style="left:285.5px;top:193px;width:1448px;height:1px;background:#d9d6d4;"></div>
<div class="r" style="left:285.5px;top:216.5px;width:1448px;height:1px;background:#e2e2e2;"></div>
<div class="r" style="left:285.5px;top:238.7px;width:41px;height:1px;background:#e6e9ea;"></div>
<div class="r" style="left:326.3px;top:238.7px;width:1407px;height:1px;background:#e0e0e0;"></div>
<div class="r" style="left:285.5px;top:259.09999999999997px;width:41px;height:1px;background:#e6e9ea;"></div>
<div class="r" style="left:326.3px;top:259.09999999999997px;width:1407px;height:1px;background:#d9d9d9;"></div>
<div class="r" style="left:285.5px;top:279.5px;width:41px;height:1px;background:#e6e9ea;"></div>
<div class="r" style="left:326.3px;top:279.5px;width:1407px;height:1px;background:#d9d9d9;"></div>
<div class="r" style="left:285.5px;top:299.9px;width:41px;height:1px;background:#e6e9ea;"></div>
<div class="r" style="left:326.3px;top:299.9px;width:1407px;height:1px;background:#d9d9d9;"></div>
<div class="r" style="left:285.5px;top:320.29999999999995px;width:41px;height:1px;background:#e6e9ea;"></div>
<div class="r" style="left:326.3px;top:320.29999999999995px;width:1407px;height:1px;background:#d9d9d9;"></div>
<div class="r" style="left:285.5px;top:340.7px;width:41px;height:1px;background:#e6e9ea;"></div>
<div class="r" style="left:326.3px;top:340.7px;width:1407px;height:1px;background:#d9d9d9;"></div>
<div class="r" style="left:285.5px;top:361.09999999999997px;width:41px;height:1px;background:#e6e9ea;"></div>
<div class="r" style="left:326.3px;top:361.09999999999997px;width:1407px;height:1px;background:#d9d9d9;"></div>
<div class="r" style="left:285.5px;top:381.5px;width:41px;height:1px;background:#e6e9ea;"></div>
<div class="r" style="left:326.3px;top:381.5px;width:1407px;height:1px;background:#d9d9d9;"></div>
<div class="r" style="left:285.5px;top:401.9px;width:41px;height:1px;background:#e6e9ea;"></div>
<div class="r" style="left:326.3px;top:401.9px;width:1407px;height:1px;background:#d9d9d9;"></div>
<div class="r" style="left:285.5px;top:422.29999999999995px;width:41px;height:1px;background:#e6e9ea;"></div>
<div class="r" style="left:326.3px;top:422.29999999999995px;width:1407px;height:1px;background:#d9d9d9;"></div>
<div class="r" style="left:285.5px;top:442.7px;width:41px;height:1px;background:#e6e9ea;"></div>
<div class="r" style="left:326.3px;top:442.7px;width:1407px;height:1px;background:#d9d9d9;"></div>
<div class="r" style="left:285.2px;top:193px;width:1px;height:862px;background:#d9d6d4;"></div>
<div class="r" style="left:325.8px;top:217px;width:1px;height:226.2px;background:#dadada;"></div>
<div class="r" style="left:463.0px;top:217px;width:1px;height:226.2px;background:#dadada;"></div>
<div class="r" style="left:645.9px;top:217px;width:1px;height:226.2px;background:#dadada;"></div>
<div class="r" style="left:709.8px;top:217px;width:1px;height:226.2px;background:#dadada;"></div>
<div class="r" style="left:773.9px;top:217px;width:1px;height:226.2px;background:#dadada;"></div>
<div class="r" style="left:837.7px;top:217px;width:1px;height:226.2px;background:#dadada;"></div>
<div class="r" style="left:929.0px;top:217px;width:1px;height:226.2px;background:#dadada;"></div>
<div class="r" style="left:992.8px;top:217px;width:1px;height:226.2px;background:#dadada;"></div>
<div class="r" style="left:1061.3px;top:217px;width:1px;height:226.2px;background:#dadada;"></div>
<div class="r" style="left:1129.8px;top:217px;width:1px;height:226.2px;background:#dadada;"></div>
<div class="r" style="left:1198.3px;top:217px;width:1px;height:226.2px;background:#dadada;"></div>
<div class="r" style="left:1266.8px;top:217px;width:1px;height:226.2px;background:#dadada;"></div>
<div class="r" style="left:1335.3px;top:217px;width:1px;height:226.2px;background:#dadada;"></div>
<div class="r" style="left:1403.8px;top:217px;width:1px;height:226.2px;background:#dadada;"></div>
<div class="r" style="left:1472.3px;top:217px;width:1px;height:226.2px;background:#dadada;"></div>
<div class="r" style="left:1540.8px;top:217px;width:1px;height:226.2px;background:#dadada;"></div>
<div class="r" style="left:1609.3px;top:217px;width:1px;height:226.2px;background:#dadada;"></div>
<div class="r" style="left:1677.8px;top:217px;width:1px;height:226.2px;background:#dadada;"></div>
<div class="r" style="left:645.9px;top:193px;width:1px;height:24px;background:#e4e4e4;"></div>
<div class="r" style="left:709.8px;top:193px;width:1px;height:24px;background:#e4e4e4;"></div>
<div class="r" style="left:837.7px;top:193px;width:1px;height:24px;background:#e4e4e4;"></div>
<div class="r" style="left:929.0px;top:193px;width:1px;height:24px;background:#e4e4e4;"></div>
<div class="r" style="left:992.8px;top:193px;width:1px;height:24px;background:#e4e4e4;"></div>
<div class="r" style="left:1198.5px;top:193px;width:1px;height:24px;background:#e4e4e4;"></div>
<div class="r" style="left:1404.0px;top:193px;width:1px;height:24px;background:#e4e4e4;"></div>
<div class="r" style="left:1609.5px;top:193px;width:1px;height:24px;background:#e4e4e4;"></div>
<div class="r" style="left:1733px;top:193px;width:1px;height:857px;background:#d9d6d4;"></div>
<svg style="left:314px;top:227px" width="12" height="11"><path d="M10 1 V9.5 H1.5 Z" fill="#ececec"/></svg>
<div class="t" style="left:795.93px;width:600px;text-align:center;top:200.71px;font-size:10.5px;color:#86a6c3;letter-spacing:-0.442px;">START 5%</div>
<div class="t" style="left:1001.62px;width:600px;text-align:center;top:200.71px;font-size:10.5px;color:#86a6c3;letter-spacing:-0.262px;">IDC 50%</div>
<div class="t" style="left:1207.02px;width:600px;text-align:center;top:200.71px;font-size:10.5px;color:#86a6c3;letter-spacing:-0.455px;">AFC 75%</div>
<div class="t" style="left:1412.54px;width:600px;text-align:center;top:200.71px;font-size:10.5px;color:#86a6c3;letter-spacing:-0.417px;">IFC 100%</div>
<div class="t" style="left:331.30px;top:222.71px;font-size:13.1px;color:#5b84aa;letter-spacing:0.451px;">Document Id</div>
<svg style="left:448.00px;top:225.5px" width="8" height="9"><path d="M0 0.3 H7.4 L4.5 3.4 V6.4 L2.9 5.4 V3.4 Z" fill="#3a5670"/></svg>
<div class="t" style="left:468.50px;top:222.71px;font-size:13.1px;color:#5b84aa;letter-spacing:0.25px;">Title</div>
<svg style="left:630.90px;top:225.5px" width="8" height="9"><path d="M0 0.3 H7.4 L4.5 3.4 V6.4 L2.9 5.4 V3.4 Z" fill="#3a5670"/></svg>
<div class="t" style="left:651.40px;top:222.71px;font-size:13.1px;color:#5b84aa;letter-spacing:-0.272px;">Revi...</div>
<svg style="left:694.80px;top:225.5px" width="8" height="9"><path d="M0 0.3 H7.4 L4.5 3.4 V6.4 L2.9 5.4 V3.4 Z" fill="#3a5670"/></svg>
<div class="t" style="left:715.30px;top:222.71px;font-size:13.1px;color:#5b84aa;letter-spacing:0.164px;">Activ...</div>
<svg style="left:758.90px;top:225.5px" width="8" height="9"><path d="M0 0.3 H7.4 L4.5 3.4 V6.4 L2.9 5.4 V3.4 Z" fill="#3a5670"/></svg>
<div class="t" style="left:779.40px;top:222.71px;font-size:13.1px;color:#5b84aa;letter-spacing:-0.008px;">Prog...</div>
<svg style="left:822.70px;top:225.5px" width="8" height="9"><path d="M0 0.3 H7.4 L4.5 3.4 V6.4 L2.9 5.4 V3.4 Z" fill="#3a5670"/></svg>
<div class="t" style="left:843.20px;top:222.71px;font-size:13.1px;color:#5b84aa;letter-spacing:0.067px;">Next Pro...</div>
<svg style="left:914.00px;top:225.5px" width="8" height="9"><path d="M0 0.3 H7.4 L4.5 3.4 V6.4 L2.9 5.4 V3.4 Z" fill="#3a5670"/></svg>
<div class="t" style="left:934.50px;top:222.71px;font-size:13.1px;color:#5b84aa;letter-spacing:-0.016px;">Wei...</div>
<svg style="left:977.80px;top:225.5px" width="8" height="9"><path d="M0 0.3 H7.4 L4.5 3.4 V6.4 L2.9 5.4 V3.4 Z" fill="#3a5670"/></svg>
<div class="t" style="left:998.30px;top:222.71px;font-size:13.1px;color:#5b84aa;letter-spacing:-0.099px;">Plann...</div>
<svg style="left:1046.30px;top:225.5px" width="8" height="9"><path d="M0 0.3 H7.4 L4.5 3.4 V6.4 L2.9 5.4 V3.4 Z" fill="#3a5670"/></svg>
<div class="t" style="left:1066.80px;top:222.71px;font-size:13.1px;color:#5b84aa;letter-spacing:-0.17px;">Forec...</div>
<svg style="left:1114.80px;top:225.5px" width="8" height="9"><path d="M0 0.3 H7.4 L4.5 3.4 V6.4 L2.9 5.4 V3.4 Z" fill="#3a5670"/></svg>
<div class="t" style="left:1135.30px;top:222.71px;font-size:13.1px;color:#5b84aa;letter-spacing:0.237px;">Actual</div>
<svg style="left:1183.30px;top:225.5px" width="8" height="9"><path d="M0 0.3 H7.4 L4.5 3.4 V6.4 L2.9 5.4 V3.4 Z" fill="#3a5670"/></svg>
<div class="t" style="left:1203.80px;top:222.71px;font-size:13.1px;color:#5b84aa;letter-spacing:-0.099px;">Plann...</div>
<svg style="left:1251.80px;top:225.5px" width="8" height="9"><path d="M0 0.3 H7.4 L4.5 3.4 V6.4 L2.9 5.4 V3.4 Z" fill="#3a5670"/></svg>
<div class="t" style="left:1272.30px;top:222.71px;font-size:13.1px;color:#5b84aa;letter-spacing:-0.17px;">Forec...</div>
<svg style="left:1320.30px;top:225.5px" width="8" height="9"><path d="M0 0.3 H7.4 L4.5 3.4 V6.4 L2.9 5.4 V3.4 Z" fill="#3a5670"/></svg>
<div class="t" style="left:1340.80px;top:222.71px;font-size:13.1px;color:#5b84aa;letter-spacing:0.237px;">Actual</div>
<svg style="left:1388.80px;top:225.5px" width="8" height="9"><path d="M0 0.3 H7.4 L4.5 3.4 V6.4 L2.9 5.4 V3.4 Z" fill="#3a5670"/></svg>
<div class="t" style="left:1409.30px;top:222.71px;font-size:13.1px;color:#5b84aa;letter-spacing:-0.099px;">Plann...</div>
<svg style="left:1457.30px;top:225.5px" width="8" height="9"><path d="M0 0.3 H7.4 L4.5 3.4 V6.4 L2.9 5.4 V3.4 Z" fill="#3a5670"/></svg>
<div class="t" style="left:1477.80px;top:222.71px;font-size:13.1px;color:#5b84aa;letter-spacing:-0.17px;">Forec...</div>
<svg style="left:1525.80px;top:225.5px" width="8" height="9"><path d="M0 0.3 H7.4 L4.5 3.4 V6.4 L2.9 5.4 V3.4 Z" fill="#3a5670"/></svg>
<div class="t" style="left:1546.30px;top:222.71px;font-size:13.1px;color:#5b84aa;letter-spacing:0.237px;">Actual</div>
<svg style="left:1594.30px;top:225.5px" width="8" height="9"><path d="M0 0.3 H7.4 L4.5 3.4 V6.4 L2.9 5.4 V3.4 Z" fill="#3a5670"/></svg>
<div class="t" style="left:1614.80px;top:222.71px;font-size:13.1px;color:#5b84aa;letter-spacing:-0.099px;">Plann...</div>
<svg style="left:1662.80px;top:225.5px" width="8" height="9"><path d="M0 0.3 H7.4 L4.5 3.4 V6.4 L2.9 5.4 V3.4 Z" fill="#3a5670"/></svg>
<div class="t" style="left:1683.30px;top:222.71px;font-size:13.1px;color:#5b84aa;letter-spacing:-0.17px;">Forec...</div>
<svg style="left:1731.30px;top:225.5px" width="8" height="9"><path d="M0 0.3 H7.4 L4.5 3.4 V6.4 L2.9 5.4 V3.4 Z" fill="#3a5670"/></svg>
<svg style="left:433.5px;top:226px" width="10" height="7"><path d="M0.5 6 L4.7 1 L8.9 6 Z" fill="#3a5670"/></svg>
<div class="r" style="left:1336.3px;top:238px;width:68.2px;height:2.2px;background:#2c5f8a;"></div>
<div class="t" style="left:295.50px;top:244.11px;font-size:10.5px;color:#4a4a4a;letter-spacing:-0.221px;">1</div>
<div class="t" style="left:331.00px;top:244.11px;font-size:10.5px;color:#4a4a4a;letter-spacing:-0.259px;">TN33921-CRENG-G-0001</div>
<div class="t" style="left:467.50px;top:244.11px;font-size:10.5px;color:#4a4a4a;letter-spacing:0.195px;">General geology arrangement dra...</div>
<div class="t" style="left:649.60px;top:244.11px;font-size:10.5px;color:#4a4a4a;letter-spacing:-0.221px;">01</div>
<div class="t" style="left:714.20px;top:244.11px;font-size:10.5px;color:#4a4a4a;letter-spacing:-0.099px;">TN33921-1</div>
<div class="t" style="left:435.60px;width:400.20px;text-align:right;top:244.11px;font-size:10.5px;color:#4a4a4a;letter-spacing:-0.201px;">75 %</div>
<div class="t" style="left:526.90px;width:400.20px;text-align:right;top:244.11px;font-size:10.5px;color:#4a4a4a;letter-spacing:-0.205px;">100 %</div>
<div class="t" style="left:590.70px;width:400.22px;text-align:right;top:244.11px;font-size:10.5px;color:#4a4a4a;letter-spacing:-0.221px;">10</div>
<div class="t" style="left:996.00px;top:244.11px;font-size:10.5px;color:#4a4a4a;letter-spacing:-0.22px;">14.05.2021</div>
<div class="t" style="left:1064.50px;top:244.11px;font-size:10.5px;color:#4a4a4a;letter-spacing:-0.22px;">16.06.2021</div>
<div class="t" style="left:1133.00px;top:244.11px;font-size:10.5px;color:#4a4a4a;letter-spacing:-0.22px;">07.05.2021</div>
<div class="t" style="left:1201.50px;top:244.11px;font-size:10.5px;color:#4a4a4a;letter-spacing:-0.142px;">11.06.2021</div>
<div class="t" style="left:1270.00px;top:244.11px;font-size:10.5px;color:#4a4a4a;letter-spacing:-0.22px;">17.08.2021</div>
<div class="t" style="left:1338.50px;top:244.11px;font-size:10.5px;color:#4a4a4a;letter-spacing:-0.22px;">24.06.2021</div>
<div class="t" style="left:1407.00px;top:244.11px;font-size:10.5px;color:#4a4a4a;letter-spacing:-0.22px;">25.06.2021</div>
<div class="t" style="left:1475.50px;top:244.11px;font-size:10.5px;color:#4a4a4a;letter-spacing:-0.22px;">19.08.2021</div>
<div class="t" style="left:1544.00px;top:244.11px;font-size:10.5px;color:#4a4a4a;letter-spacing:-0.22px;">08.07.2021</div>
<div class="t" style="left:1612.50px;top:244.11px;font-size:10.5px;color:#f0202a;letter-spacing:-0.22px;">09.07.2021</div>
<div class="t" style="left:1681.00px;top:244.11px;font-size:10.5px;color:#f0202a;letter-spacing:-0.22px;">07.09.2021</div>
<div class="t" style="left:295.50px;top:264.51px;font-size:10.5px;color:#4a4a4a;letter-spacing:-0.221px;">2</div>
<div class="t" style="left:331.00px;top:264.51px;font-size:10.5px;color:#4a4a4a;letter-spacing:-0.101px;">TN33921-NC-P-0048</div>
<div class="t" style="left:467.50px;top:264.51px;font-size:10.5px;color:#4a4a4a;letter-spacing:0.128px;">Spare Parts and Interchangability...</div>
<div class="t" style="left:649.60px;top:264.51px;font-size:10.5px;color:#4a4a4a;letter-spacing:-0.221px;">01</div>
<div class="t" style="left:714.20px;top:264.51px;font-size:10.5px;color:#4a4a4a;letter-spacing:-0.099px;">TN33921-1</div>
<div class="t" style="left:435.60px;width:400.20px;text-align:right;top:264.51px;font-size:10.5px;color:#4a4a4a;letter-spacing:-0.201px;">75 %</div>
<div class="t" style="left:526.90px;width:400.20px;text-align:right;top:264.51px;font-size:10.5px;color:#4a4a4a;letter-spacing:-0.205px;">100 %</div>
<div class="t" style="left:590.70px;width:400.22px;text-align:right;top:264.51px;font-size:10.5px;color:#4a4a4a;letter-spacing:-0.221px;">10</div>
<div class="t" style="left:996.00px;top:264.51px;font-size:10.5px;color:#4a4a4a;letter-spacing:-0.22px;">10.05.2021</div>
<div class="t" style="left:1064.50px;top:264.51px;font-size:10.5px;color:#4a4a4a;letter-spacing:-0.22px;">10.05.2021</div>
<div class="t" style="left:1133.00px;top:264.51px;font-size:10.5px;color:#4a4a4a;letter-spacing:-0.22px;">07.05.2021</div>
<div class="t" style="left:1201.50px;top:264.51px;font-size:10.5px;color:#4a4a4a;letter-spacing:-0.22px;">07.06.2021</div>
<div class="t" style="left:1270.00px;top:264.51px;font-size:10.5px;color:#4a4a4a;letter-spacing:-0.22px;">18.06.2021</div>
<div class="t" style="left:1338.50px;top:264.51px;font-size:10.5px;color:#4a4a4a;letter-spacing:-0.22px;">19.06.2021</div>
<div class="t" style="left:1407.00px;top:264.51px;font-size:10.5px;color:#4a4a4a;letter-spacing:-0.22px;">21.06.2021</div>
<div class="t" style="left:1475.50px;top:264.51px;font-size:10.5px;color:#4a4a4a;letter-spacing:-0.142px;">11.01.2023</div>
<div class="t" style="left:1544.00px;top:264.51px;font-size:10.5px;color:#4a4a4a;letter-spacing:-0.22px;">22.06.2021</div>
<div class="t" style="left:1612.50px;top:264.51px;font-size:10.5px;color:#f0202a;letter-spacing:-0.22px;">05.07.2021</div>
<div class="t" style="left:1681.00px;top:264.51px;font-size:10.5px;color:#f0202a;letter-spacing:-0.22px;">16.01.2023</div>
<div class="t" style="left:295.50px;top:284.91px;font-size:10.5px;color:#4a4a4a;letter-spacing:-0.221px;">3</div>
<div class="t" style="left:331.00px;top:284.91px;font-size:10.5px;color:#4a4a4a;letter-spacing:-0.101px;">TN33921-NC-P-0125</div>
<div class="t" style="left:467.50px;top:284.91px;font-size:10.5px;color:#4a4a4a;letter-spacing:0.027px;">Product Data Sheets (Leaflets)</div>
<div class="t" style="left:649.60px;top:284.91px;font-size:10.5px;color:#4a4a4a;letter-spacing:-0.221px;">01</div>
<div class="t" style="left:714.20px;top:284.91px;font-size:10.5px;color:#4a4a4a;letter-spacing:-0.099px;">TN33921-1</div>
<div class="t" style="left:435.60px;width:400.20px;text-align:right;top:284.91px;font-size:10.5px;color:#4a4a4a;letter-spacing:-0.201px;">75 %</div>
<div class="t" style="left:526.90px;width:400.20px;text-align:right;top:284.91px;font-size:10.5px;color:#4a4a4a;letter-spacing:-0.205px;">100 %</div>
<div class="t" style="left:590.70px;width:400.22px;text-align:right;top:284.91px;font-size:10.5px;color:#4a4a4a;letter-spacing:-0.221px;">10</div>
<div class="t" style="left:996.00px;top:284.91px;font-size:10.5px;color:#4a4a4a;letter-spacing:-0.22px;">10.05.2021</div>
<div class="t" style="left:1064.50px;top:284.91px;font-size:10.5px;color:#4a4a4a;letter-spacing:-0.22px;">10.05.2021</div>
<div class="t" style="left:1133.00px;top:284.91px;font-size:10.5px;color:#4a4a4a;letter-spacing:-0.22px;">07.05.2021</div>
<div class="t" style="left:1201.50px;top:284.91px;font-size:10.5px;color:#4a4a4a;letter-spacing:-0.22px;">07.06.2021</div>
<div class="t" style="left:1270.00px;top:284.91px;font-size:10.5px;color:#4a4a4a;letter-spacing:-0.22px;">07.06.2021</div>
<div class="t" style="left:1338.50px;top:284.91px;font-size:10.5px;color:#4a4a4a;letter-spacing:-0.22px;">07.05.2021</div>
<div class="t" style="left:1407.00px;top:284.91px;font-size:10.5px;color:#4a4a4a;letter-spacing:-0.22px;">21.06.2021</div>
<div class="t" style="left:1475.50px;top:284.91px;font-size:10.5px;color:#4a4a4a;letter-spacing:-0.22px;">21.06.2021</div>
<div class="t" style="left:1544.00px;top:284.91px;font-size:10.5px;color:#4a4a4a;letter-spacing:-0.22px;">04.07.2021</div>
<div class="t" style="left:1612.50px;top:284.91px;font-size:10.5px;color:#f0202a;letter-spacing:-0.22px;">05.07.2021</div>
<div class="t" style="left:1681.00px;top:284.91px;font-size:10.5px;color:#f0202a;letter-spacing:-0.22px;">05.07.2021</div>
<div class="t" style="left:295.50px;top:305.31px;font-size:10.5px;color:#4a4a4a;letter-spacing:-0.221px;">4</div>
<div class="t" style="left:331.00px;top:305.31px;font-size:10.5px;color:#4a4a4a;letter-spacing:-0.101px;">TN33921-NC-P-0126</div>
<div class="t" style="left:467.50px;top:305.31px;font-size:10.5px;color:#4a4a4a;letter-spacing:0.192px;">Intrument Data Sheets</div>
<div class="t" style="left:649.60px;top:305.31px;font-size:10.5px;color:#4a4a4a;letter-spacing:-0.221px;">01</div>
<div class="t" style="left:714.20px;top:305.31px;font-size:10.5px;color:#4a4a4a;letter-spacing:-0.099px;">TN33921-1</div>
<div class="t" style="left:435.60px;width:400.20px;text-align:right;top:305.31px;font-size:10.5px;color:#4a4a4a;letter-spacing:-0.201px;">75 %</div>
<div class="t" style="left:526.90px;width:400.20px;text-align:right;top:305.31px;font-size:10.5px;color:#4a4a4a;letter-spacing:-0.205px;">100 %</div>
<div class="t" style="left:590.70px;width:400.22px;text-align:right;top:305.31px;font-size:10.5px;color:#4a4a4a;letter-spacing:-0.221px;">10</div>
<div class="t" style="left:996.00px;top:305.31px;font-size:10.5px;color:#4a4a4a;letter-spacing:-0.22px;">10.05.2021</div>
<div class="t" style="left:1064.50px;top:305.31px;font-size:10.5px;color:#4a4a4a;letter-spacing:-0.22px;">10.05.2021</div>
<div class="t" style="left:1133.00px;top:305.31px;font-size:10.5px;color:#4a4a4a;letter-spacing:-0.22px;">07.05.2021</div>
<div class="t" style="left:1201.50px;top:305.31px;font-size:10.5px;color:#4a4a4a;letter-spacing:-0.22px;">07.06.2021</div>
<div class="t" style="left:1270.00px;top:305.31px;font-size:10.5px;color:#4a4a4a;letter-spacing:-0.22px;">07.06.2021</div>
<div class="t" style="left:1338.50px;top:305.31px;font-size:10.5px;color:#4a4a4a;letter-spacing:-0.22px;">07.05.2021</div>
<div class="t" style="left:1407.00px;top:305.31px;font-size:10.5px;color:#4a4a4a;letter-spacing:-0.22px;">21.06.2021</div>
<div class="t" style="left:1475.50px;top:305.31px;font-size:10.5px;color:#4a4a4a;letter-spacing:-0.22px;">21.06.2021</div>
<div class="t" style="left:1544.00px;top:305.31px;font-size:10.5px;color:#4a4a4a;letter-spacing:-0.22px;">07.05.2021</div>
<div class="t" style="left:1612.50px;top:305.31px;font-size:10.5px;color:#f0202a;letter-spacing:-0.22px;">05.07.2021</div>
<div class="t" style="left:1681.00px;top:305.31px;font-size:10.5px;color:#f0202a;letter-spacing:-0.22px;">05.07.2021</div>
<div class="t" style="left:295.50px;top:325.71px;font-size:10.5px;color:#4a4a4a;letter-spacing:-0.221px;">5</div>
<div class="t" style="left:331.00px;top:325.71px;font-size:10.5px;color:#4a4a4a;letter-spacing:-0.101px;">TN33921-NC-P-0168</div>
<div class="t" style="left:467.50px;top:325.71px;font-size:10.5px;color:#4a4a4a;letter-spacing:0.027px;">Product Data Sheets (Leaflets)</div>
<div class="t" style="left:649.60px;top:325.71px;font-size:10.5px;color:#4a4a4a;letter-spacing:-0.221px;">02</div>
<div class="t" style="left:714.20px;top:325.71px;font-size:10.5px;color:#4a4a4a;letter-spacing:-0.099px;">TN33921-1</div>
<div class="t" style="left:435.60px;width:400.20px;text-align:right;top:325.71px;font-size:10.5px;color:#4a4a4a;letter-spacing:-0.201px;">75 %</div>
<div class="t" style="left:526.90px;width:400.20px;text-align:right;top:325.71px;font-size:10.5px;color:#4a4a4a;letter-spacing:-0.205px;">100 %</div>
<div class="t" style="left:590.70px;width:400.22px;text-align:right;top:325.71px;font-size:10.5px;color:#4a4a4a;letter-spacing:-0.221px;">10</div>
<div class="t" style="left:996.00px;top:325.71px;font-size:10.5px;color:#4a4a4a;letter-spacing:-0.142px;">17.11.2022</div>
<div class="t" style="left:1064.50px;top:325.71px;font-size:10.5px;color:#4a4a4a;letter-spacing:-0.142px;">17.11.2022</div>
<div class="t" style="left:1133.00px;top:325.71px;font-size:10.5px;color:#4a4a4a;letter-spacing:-0.142px;">10.11.2022</div>
<div class="t" style="left:1201.50px;top:325.71px;font-size:10.5px;color:#4a4a4a;letter-spacing:-0.22px;">17.12.2022</div>
<div class="t" style="left:1270.00px;top:325.71px;font-size:10.5px;color:#4a4a4a;letter-spacing:-0.22px;">15.12.2022</div>
<div class="t" style="left:1338.50px;top:325.71px;font-size:10.5px;color:#4a4a4a;letter-spacing:-0.22px;">20.12.2022</div>
<div class="t" style="left:1407.00px;top:325.71px;font-size:10.5px;color:#4a4a4a;letter-spacing:-0.22px;">29.12.2022</div>
<div class="t" style="left:1475.50px;top:325.71px;font-size:10.5px;color:#4a4a4a;letter-spacing:-0.22px;">24.02.2023</div>
<div class="t" style="left:1544.00px;top:325.71px;font-size:10.5px;color:#4a4a4a;letter-spacing:-0.22px;">12.01.2023</div>
<div class="t" style="left:1612.50px;top:325.71px;font-size:10.5px;color:#f0202a;letter-spacing:-0.22px;">12.01.2023</div>
<div class="t" style="left:1681.00px;top:325.71px;font-size:10.5px;color:#4a4a4a;letter-spacing:-0.22px;">15.04.2023</div>
<div class="t" style="left:295.50px;top:346.11px;font-size:10.5px;color:#4a4a4a;letter-spacing:-0.221px;">6</div>
<div class="t" style="left:331.00px;top:346.11px;font-size:10.5px;color:#4a4a4a;letter-spacing:-0.186px;">TN33921-NFS-P-0064</div>
<div class="t" style="left:467.50px;top:346.11px;font-size:10.5px;color:#4a4a4a;letter-spacing:0.012px;">Process register</div>
<div class="t" style="left:649.60px;top:346.11px;font-size:10.5px;color:#4a4a4a;letter-spacing:-0.221px;">01</div>
<div class="t" style="left:714.20px;top:346.11px;font-size:10.5px;color:#4a4a4a;letter-spacing:-0.099px;">TN33921-1</div>
<div class="t" style="left:435.60px;width:400.20px;text-align:right;top:346.11px;font-size:10.5px;color:#4a4a4a;letter-spacing:-0.201px;">75 %</div>
<div class="t" style="left:526.90px;width:400.20px;text-align:right;top:346.11px;font-size:10.5px;color:#4a4a4a;letter-spacing:-0.205px;">100 %</div>
<div class="t" style="left:590.70px;width:400.22px;text-align:right;top:346.11px;font-size:10.5px;color:#4a4a4a;letter-spacing:-0.221px;">10</div>
<div class="t" style="left:996.00px;top:346.11px;font-size:10.5px;color:#4a4a4a;letter-spacing:-0.22px;">10.05.2021</div>
<div class="t" style="left:1064.50px;top:346.11px;font-size:10.5px;color:#4a4a4a;letter-spacing:-0.22px;">10.05.2021</div>
<div class="t" style="left:1133.00px;top:346.11px;font-size:10.5px;color:#4a4a4a;letter-spacing:-0.22px;">07.05.2021</div>
<div class="t" style="left:1201.50px;top:346.11px;font-size:10.5px;color:#4a4a4a;letter-spacing:-0.22px;">07.06.2021</div>
<div class="t" style="left:1270.00px;top:346.11px;font-size:10.5px;color:#4a4a4a;letter-spacing:-0.22px;">07.06.2021</div>
<div class="t" style="left:1338.50px;top:346.11px;font-size:10.5px;color:#4a4a4a;letter-spacing:-0.22px;">07.05.2021</div>
<div class="t" style="left:1407.00px;top:346.11px;font-size:10.5px;color:#4a4a4a;letter-spacing:-0.22px;">21.06.2021</div>
<div class="t" style="left:1475.50px;top:346.11px;font-size:10.5px;color:#4a4a4a;letter-spacing:-0.22px;">25.06.2021</div>
<div class="t" style="left:1544.00px;top:346.11px;font-size:10.5px;color:#4a4a4a;letter-spacing:-0.22px;">02.07.2021</div>
<div class="t" style="left:1612.50px;top:346.11px;font-size:10.5px;color:#f0202a;letter-spacing:-0.22px;">05.07.2021</div>
<div class="t" style="left:1681.00px;top:346.11px;font-size:10.5px;color:#f0202a;letter-spacing:-0.22px;">05.07.2021</div>
<div class="t" style="left:295.50px;top:366.51px;font-size:10.5px;color:#4a4a4a;letter-spacing:-0.221px;">7</div>
<div class="t" style="left:331.00px;top:366.51px;font-size:10.5px;color:#4a4a4a;letter-spacing:-0.186px;">TN33921-NFS-P-0168</div>
<div class="t" style="left:467.50px;top:366.51px;font-size:10.5px;color:#4a4a4a;letter-spacing:0.228px;">Manufacturing Record Book</div>
<div class="t" style="left:649.60px;top:366.51px;font-size:10.5px;color:#4a4a4a;letter-spacing:-0.221px;">01</div>
<div class="t" style="left:714.20px;top:366.51px;font-size:10.5px;color:#4a4a4a;letter-spacing:-0.099px;">TN33921-1</div>
<div class="t" style="left:435.60px;width:400.20px;text-align:right;top:366.51px;font-size:10.5px;color:#4a4a4a;letter-spacing:-0.201px;">70 %</div>
<div class="t" style="left:526.90px;width:400.20px;text-align:right;top:366.51px;font-size:10.5px;color:#4a4a4a;letter-spacing:-0.201px;">75 %</div>
<div class="t" style="left:590.70px;width:400.22px;text-align:right;top:366.51px;font-size:10.5px;color:#4a4a4a;letter-spacing:-0.221px;">10</div>
<div class="t" style="left:996.00px;top:366.51px;font-size:10.5px;color:#4a4a4a;letter-spacing:-0.22px;">10.05.2021</div>
<div class="t" style="left:1064.50px;top:366.51px;font-size:10.5px;color:#4a4a4a;letter-spacing:-0.22px;">10.05.2021</div>
<div class="t" style="left:1133.00px;top:366.51px;font-size:10.5px;color:#4a4a4a;letter-spacing:-0.22px;">07.05.2021</div>
<div class="t" style="left:1201.50px;top:366.51px;font-size:10.5px;color:#4a4a4a;letter-spacing:-0.22px;">07.06.2021</div>
<div class="t" style="left:1270.00px;top:366.51px;font-size:10.5px;color:#4a4a4a;letter-spacing:-0.22px;">07.06.2021</div>
<div class="t" style="left:1338.50px;top:366.51px;font-size:10.5px;color:#4a4a4a;letter-spacing:-0.22px;">07.05.2021</div>
<div class="t" style="left:1407.00px;top:366.51px;font-size:10.5px;color:#f0202a;letter-spacing:-0.22px;">21.06.2021</div>
<div class="t" style="left:1475.50px;top:366.51px;font-size:10.5px;color:#f0202a;letter-spacing:-0.22px;">25.06.2021</div>
<div class="t" style="left:1612.50px;top:366.51px;font-size:10.5px;color:#f0202a;letter-spacing:-0.22px;">05.07.2021</div>
<div class="t" style="left:1681.00px;top:366.51px;font-size:10.5px;color:#f0202a;letter-spacing:-0.22px;">05.07.2021</div>
<div class="t" style="left:295.50px;top:386.91px;font-size:10.5px;color:#4a4a4a;letter-spacing:-0.221px;">8</div>
<div class="t" style="left:331.00px;top:386.91px;font-size:10.5px;color:#4a4a4a;letter-spacing:-0.186px;">TN33921-NFS-P-0170</div>
<div class="t" style="left:467.50px;top:386.91px;font-size:10.5px;color:#4a4a4a;letter-spacing:0.114px;">Supplier/Sub Supplier List</div>
<div class="t" style="left:649.60px;top:386.91px;font-size:10.5px;color:#4a4a4a;letter-spacing:-0.221px;">01</div>
<div class="t" style="left:714.20px;top:386.91px;font-size:10.5px;color:#4a4a4a;letter-spacing:-0.099px;">TN33921-1</div>
<div class="t" style="left:435.60px;width:400.20px;text-align:right;top:386.91px;font-size:10.5px;color:#4a4a4a;letter-spacing:-0.201px;">50 %</div>
<div class="t" style="left:526.90px;width:400.20px;text-align:right;top:386.91px;font-size:10.5px;color:#4a4a4a;letter-spacing:-0.201px;">75 %</div>
<div class="t" style="left:590.70px;width:400.22px;text-align:right;top:386.91px;font-size:10.5px;color:#4a4a4a;letter-spacing:-0.221px;">20</div>
<div class="t" style="left:996.00px;top:386.91px;font-size:10.5px;color:#4a4a4a;letter-spacing:-0.22px;">10.05.2021</div>
<div class="t" style="left:1064.50px;top:386.91px;font-size:10.5px;color:#4a4a4a;letter-spacing:-0.22px;">10.05.2021</div>
<div class="t" style="left:1133.00px;top:386.91px;font-size:10.5px;color:#4a4a4a;letter-spacing:-0.22px;">07.05.2021</div>
<div class="t" style="left:1201.50px;top:386.91px;font-size:10.5px;color:#4a4a4a;letter-spacing:-0.22px;">07.06.2021</div>
<div class="t" style="left:1270.00px;top:386.91px;font-size:10.5px;color:#4a4a4a;letter-spacing:-0.22px;">18.06.2021</div>
<div class="t" style="left:1338.50px;top:386.91px;font-size:10.5px;color:#4a4a4a;letter-spacing:-0.22px;">20.06.2021</div>
<div class="t" style="left:1407.00px;top:386.91px;font-size:10.5px;color:#f0202a;letter-spacing:-0.22px;">21.06.2021</div>
<div class="t" style="left:1475.50px;top:386.91px;font-size:10.5px;color:#f0202a;letter-spacing:-0.22px;">25.06.2021</div>
<div class="t" style="left:1612.50px;top:386.91px;font-size:10.5px;color:#f0202a;letter-spacing:-0.22px;">05.07.2021</div>
<div class="t" style="left:1681.00px;top:386.91px;font-size:10.5px;color:#f0202a;letter-spacing:-0.22px;">05.07.2021</div>
<div class="t" style="left:295.50px;top:407.31px;font-size:10.5px;color:#4a4a4a;letter-spacing:-0.221px;">9</div>
<div class="t" style="left:331.00px;top:407.31px;font-size:10.5px;color:#4a4a4a;letter-spacing:-0.166px;">TN33921-PE-D-0058</div>
<div class="t" style="left:467.50px;top:407.31px;font-size:10.5px;color:#4a4a4a;letter-spacing:0.128px;">Spare Parts and Interchangability...</div>
<div class="t" style="left:649.60px;top:407.31px;font-size:10.5px;color:#4a4a4a;letter-spacing:-0.221px;">01</div>
<div class="t" style="left:714.20px;top:407.31px;font-size:10.5px;color:#4a4a4a;letter-spacing:-0.099px;">TN33921-1</div>
<div class="t" style="left:435.60px;width:400.19px;text-align:right;top:407.31px;font-size:10.5px;color:#4a4a4a;letter-spacing:-0.195px;">0 %</div>
<div class="t" style="left:526.90px;width:400.19px;text-align:right;top:407.31px;font-size:10.5px;color:#4a4a4a;letter-spacing:-0.195px;">5 %</div>
<div class="t" style="left:590.70px;width:400.22px;text-align:right;top:407.31px;font-size:10.5px;color:#4a4a4a;letter-spacing:-0.221px;">0</div>
<div class="t" style="left:996.00px;top:407.31px;font-size:10.5px;color:#f0202a;letter-spacing:-0.22px;">18.01.2023</div>
<div class="t" style="left:1064.50px;top:407.31px;font-size:10.5px;color:#f0202a;letter-spacing:-0.22px;">18.01.2023</div>
<div class="t" style="left:1201.50px;top:407.31px;font-size:10.5px;color:#f0202a;letter-spacing:-0.22px;">15.02.2023</div>
<div class="t" style="left:1270.00px;top:407.31px;font-size:10.5px;color:#f0202a;letter-spacing:-0.22px;">15.02.2023</div>
<div class="t" style="left:1407.00px;top:407.31px;font-size:10.5px;color:#f0202a;letter-spacing:-0.22px;">01.03.2023</div>
<div class="t" style="left:1475.50px;top:407.31px;font-size:10.5px;color:#f0202a;letter-spacing:-0.22px;">01.03.2023</div>
<div class="t" style="left:1612.50px;top:407.31px;font-size:10.5px;color:#f0202a;letter-spacing:-0.22px;">15.03.2023</div>
<div class="t" style="left:1681.00px;top:407.31px;font-size:10.5px;color:#f0202a;letter-spacing:-0.22px;">15.03.2023</div>
<div class="t" style="left:293.00px;top:427.71px;font-size:10.5px;color:#4a4a4a;letter-spacing:-0.221px;">10</div>
<div class="t" style="left:331.00px;top:427.71px;font-size:10.5px;color:#4a4a4a;letter-spacing:-0.166px;">TN33921-PE-D-0087</div>
<div class="t" style="left:467.50px;top:427.71px;font-size:10.5px;color:#4a4a4a;letter-spacing:0.224px;">Intrument Data sheets</div>
<div class="t" style="left:649.60px;top:427.71px;font-size:10.5px;color:#4a4a4a;letter-spacing:-0.221px;">02</div>
<div class="t" style="left:714.20px;top:427.71px;font-size:10.5px;color:#4a4a4a;letter-spacing:-0.099px;">TN33921-1</div>
<div class="t" style="left:435.60px;width:400.20px;text-align:right;top:427.71px;font-size:10.5px;color:#4a4a4a;letter-spacing:-0.201px;">75 %</div>
<div class="t" style="left:526.90px;width:400.20px;text-align:right;top:427.71px;font-size:10.5px;color:#4a4a4a;letter-spacing:-0.205px;">100 %</div>
<div class="t" style="left:590.70px;width:400.22px;text-align:right;top:427.71px;font-size:10.5px;color:#4a4a4a;letter-spacing:-0.221px;">10</div>
<div class="t" style="left:996.00px;top:427.71px;font-size:10.5px;color:#4a4a4a;letter-spacing:-0.22px;">09.06.2022</div>
<div class="t" style="left:1064.50px;top:427.71px;font-size:10.5px;color:#4a4a4a;letter-spacing:-0.22px;">09.06.2022</div>
<div class="t" style="left:1133.00px;top:427.71px;font-size:10.5px;color:#4a4a4a;letter-spacing:-0.22px;">08.06.2022</div>
<div class="t" style="left:1201.50px;top:427.71px;font-size:10.5px;color:#f0202a;letter-spacing:-0.22px;">07.07.2022</div>
<div class="t" style="left:1270.00px;top:427.71px;font-size:10.5px;color:#f0202a;letter-spacing:-0.22px;">22.07.2022</div>
<div class="t" style="left:1544.00px;top:427.71px;font-size:10.5px;color:#4a4a4a;letter-spacing:-0.22px;">19.12.2022</div>
<div class="t" style="left:1612.50px;top:427.71px;font-size:10.5px;color:#f0202a;letter-spacing:-0.22px;">04.08.2022</div>
<div class="t" style="left:1681.00px;top:427.71px;font-size:10.5px;color:#f0202a;letter-spacing:-0.22px;">04.08.2022</div>
<div class="r" style="left:326.3px;top:402.4px;width:2px;height:20.4px;background:#1f4d78;"></div>
<div class="r" style="left:1334.8px;top:401.4px;width:70px;height:21.5px;background:#fff;border:1.7px solid #36618c;border-radius:1.5px;box-sizing:border-box;"></div>
<div class="r" style="left:1374.6px;top:403.1px;width:28.5px;height:18.1px;background:#cde2f5;border-left:1px solid #b9c6d2;box-sizing:border-box;"></div>
<svg style="left:1382px;top:405px" width="16" height="15">
<rect x="0.8" y="0.8" width="13.3" height="12.6" rx="0.8" fill="none" stroke="#3d6a92" stroke-width="1.3"/>
<rect x="0.8" y="0.8" width="13.3" height="2.2" fill="#3d6a92"/>
<g stroke="#6f90ad" stroke-width="0.7"><line x1="1" y1="6" x2="14" y2="6"/><line x1="1" y1="9" x2="14" y2="9"/><line x1="4.3" y1="3" x2="4.3" y2="13"/><line x1="7.6" y1="3" x2="7.6" y2="13"/><line x1="10.9" y1="3" x2="10.9" y2="13"/></g>
<rect x="8.3" y="5.2" width="3.4" height="3.6" fill="none" stroke="#3d6a92" stroke-width="1.2"/>
</svg>
<div class="r" style="left:669px;top:1049.5px;width:1064.5px;height:5.5px;background:#e6e6e6;"></div>
<div class="r" style="left:669px;top:1050px;width:13px;height:5px;background:#fff;border:1px solid #d6d6d6;border-bottom:none;box-sizing:border-box;"></div>
<div class="r" style="left:684px;top:1050px;width:978px;height:5px;background:#fff;border:1px solid #d0d0d0;border-bottom:none;box-sizing:border-box;"></div>
<div class="r" style="left:1662px;top:1050px;width:58px;height:5px;background:#e1dfdd;"></div>
<div class="r" style="left:1720px;top:1050px;width:13px;height:5px;background:#fff;border:1px solid #d6d6d6;border-bottom:none;box-sizing:border-box;"></div>
</div>
<div class="r" style="left:1376px;top:426px;width:161.5px;height:190px;background:#fff;border:1px solid #bdbdbd;box-sizing:border-box;"></div>
<div class="r" style="left:1376px;top:426px;width:161.5px;height:28px;background:#03446f;"></div>
<div class="t" style="left:1152.52px;width:600px;text-align:center;top:435.31px;font-size:10.5px;color:#8eaeca;letter-spacing:0.038px;">March 2023</div>
<svg style="left:1380px;top:433px" width="150" height="16">
<path d="M13 7.5 H3.5 M7.5 3.5 L3.5 7.5 L7.5 11.5" fill="none" stroke="#8eaeca" stroke-width="1.3"/>
<path d="M131 7.5 H140.5 M136.5 3.5 L140.5 7.5 L136.5 11.5" fill="none" stroke="#c9d8e6" stroke-width="1.3"/>
</svg>
<div class="t" style="left:1095.46px;width:600px;text-align:center;top:469.61px;font-size:10.5px;color:#333;letter-spacing:0.914px;font-weight:700;">Mo</div>
<div class="t" style="left:1115.77px;width:600px;text-align:center;top:469.61px;font-size:10.5px;color:#333;letter-spacing:0.342px;font-weight:700;">Tu</div>
<div class="t" style="left:1136.42px;width:600px;text-align:center;top:469.61px;font-size:10.5px;color:#333;letter-spacing:0.645px;font-weight:700;">We</div>
<div class="t" style="left:1156.58px;width:600px;text-align:center;top:469.61px;font-size:10.5px;color:#333;letter-spacing:-0.041px;font-weight:700;">Th</div>
<div class="t" style="left:1176.84px;width:600px;text-align:center;top:469.61px;font-size:10.5px;color:#333;letter-spacing:-0.528px;font-weight:700;">Fr</div>
<div class="t" style="left:1197.38px;width:600px;text-align:center;top:469.61px;font-size:10.5px;color:#333;letter-spacing:-0.444px;font-weight:700;">Sa</div>
<div class="t" style="left:1217.92px;width:600px;text-align:center;top:469.61px;font-size:10.5px;color:#333;letter-spacing:-0.36px;font-weight:700;">Su</div>
<div class="t" style="left:1094.89px;width:600px;text-align:center;top:492.61px;font-size:10.5px;color:#9a9a9a;letter-spacing:-0.221px;">27</div>
<div class="t" style="left:1115.49px;width:600px;text-align:center;top:492.61px;font-size:10.5px;color:#9a9a9a;letter-spacing:-0.221px;">28</div>
<div class="t" style="left:1135.99px;width:600px;text-align:center;top:492.61px;font-size:10.5px;color:#444;letter-spacing:-0.221px;">1</div>
<div class="t" style="left:1156.49px;width:600px;text-align:center;top:492.61px;font-size:10.5px;color:#444;letter-spacing:-0.221px;">2</div>
<div class="t" style="left:1176.99px;width:600px;text-align:center;top:492.61px;font-size:10.5px;color:#444;letter-spacing:-0.221px;">3</div>
<div class="t" style="left:1197.49px;width:600px;text-align:center;top:492.61px;font-size:10.5px;color:#444;letter-spacing:-0.221px;">4</div>
<div class="t" style="left:1217.99px;width:600px;text-align:center;top:492.61px;font-size:10.5px;color:#444;letter-spacing:-0.221px;">5</div>
<div class="t" style="left:1094.89px;width:600px;text-align:center;top:513.11px;font-size:10.5px;color:#444;letter-spacing:-0.221px;">6</div>
<div class="t" style="left:1115.49px;width:600px;text-align:center;top:513.11px;font-size:10.5px;color:#444;letter-spacing:-0.221px;">7</div>
<div class="t" style="left:1135.99px;width:600px;text-align:center;top:513.11px;font-size:10.5px;color:#444;letter-spacing:-0.221px;">8</div>
<div class="t" style="left:1156.49px;width:600px;text-align:center;top:513.11px;font-size:10.5px;color:#444;letter-spacing:-0.221px;">9</div>
<div class="t" style="left:1176.99px;width:600px;text-align:center;top:513.11px;font-size:10.5px;color:#444;letter-spacing:-0.221px;">10</div>
<div class="t" style="left:1197.68px;width:600px;text-align:center;top:513.11px;font-size:10.5px;color:#444;letter-spacing:0.17px;">11</div>
<div class="t" style="left:1217.99px;width:600px;text-align:center;top:513.11px;font-size:10.5px;color:#444;letter-spacing:-0.221px;">12</div>
<div class="t" style="left:1094.89px;width:600px;text-align:center;top:533.61px;font-size:10.5px;color:#444;letter-spacing:-0.221px;">13</div>
<div class="t" style="left:1115.49px;width:600px;text-align:center;top:533.61px;font-size:10.5px;color:#444;letter-spacing:-0.221px;">14</div>
<div class="t" style="left:1135.99px;width:600px;text-align:center;top:533.61px;font-size:10.5px;color:#444;letter-spacing:-0.221px;">15</div>
<div class="r" style="left:1446.4px;top:529.2px;width:20.4px;height:20.4px;border-radius:50%;background:#c8d9eb;box-sizing:border-box;border:1px solid #e3c6d2"></div>
<div class="t" style="left:1156.49px;width:600px;text-align:center;top:533.61px;font-size:10.5px;color:#fff;letter-spacing:-0.221px;">16</div>
<div class="t" style="left:1176.99px;width:600px;text-align:center;top:533.61px;font-size:10.5px;color:#444;letter-spacing:-0.221px;">17</div>
<div class="t" style="left:1197.49px;width:600px;text-align:center;top:533.61px;font-size:10.5px;color:#444;letter-spacing:-0.221px;">18</div>
<div class="t" style="left:1217.99px;width:600px;text-align:center;top:533.61px;font-size:10.5px;color:#444;letter-spacing:-0.221px;">19</div>
<div class="t" style="left:1094.89px;width:600px;text-align:center;top:554.11px;font-size:10.5px;color:#444;letter-spacing:-0.221px;">20</div>
<div class="t" style="left:1115.49px;width:600px;text-align:center;top:554.11px;font-size:10.5px;color:#444;letter-spacing:-0.221px;">21</div>
<div class="t" style="left:1135.99px;width:600px;text-align:center;top:554.11px;font-size:10.5px;color:#444;letter-spacing:-0.221px;">22</div>
<div class="t" style="left:1156.49px;width:600px;text-align:center;top:554.11px;font-size:10.5px;color:#444;letter-spacing:-0.221px;">23</div>
<div class="t" style="left:1176.99px;width:600px;text-align:center;top:554.11px;font-size:10.5px;color:#444;letter-spacing:-0.221px;">24</div>
<div class="t" style="left:1197.49px;width:600px;text-align:center;top:554.11px;font-size:10.5px;color:#444;letter-spacing:-0.221px;">25</div>
<div class="t" style="left:1217.99px;width:600px;text-align:center;top:554.11px;font-size:10.5px;color:#444;letter-spacing:-0.221px;">26</div>
<div class="t" style="left:1094.89px;width:600px;text-align:center;top:574.61px;font-size:10.5px;color:#444;letter-spacing:-0.221px;">27</div>
<div class="t" style="left:1115.49px;width:600px;text-align:center;top:574.61px;font-size:10.5px;color:#444;letter-spacing:-0.221px;">28</div>
<div class="t" style="left:1135.99px;width:600px;text-align:center;top:574.61px;font-size:10.5px;color:#444;letter-spacing:-0.221px;">29</div>
<div class="t" style="left:1156.49px;width:600px;text-align:center;top:574.61px;font-size:10.5px;color:#444;letter-spacing:-0.221px;">30</div>
<div class="t" style="left:1176.99px;width:600px;text-align:center;top:574.61px;font-size:10.5px;color:#444;letter-spacing:-0.221px;">31</div>
<div class="t" style="left:1197.49px;width:600px;text-align:center;top:574.61px;font-size:10.5px;color:#9a9a9a;letter-spacing:-0.221px;">1</div>
<div class="t" style="left:1217.99px;width:600px;text-align:center;top:574.61px;font-size:10.5px;color:#9a9a9a;letter-spacing:-0.221px;">2</div>
<div class="t" style="left:1094.89px;width:600px;text-align:center;top:595.11px;font-size:10.5px;color:#9a9a9a;letter-spacing:-0.221px;">3</div>
<div class="t" style="left:1115.49px;width:600px;text-align:center;top:595.11px;font-size:10.5px;color:#9a9a9a;letter-spacing:-0.221px;">4</div>
<div class="t" style="left:1135.99px;width:600px;text-align:center;top:595.11px;font-size:10.5px;color:#9a9a9a;letter-spacing:-0.221px;">5</div>
<div class="t" style="left:1156.49px;width:600px;text-align:center;top:595.11px;font-size:10.5px;color:#9a9a9a;letter-spacing:-0.221px;">6</div>
<div class="t" style="left:1176.99px;width:600px;text-align:center;top:595.11px;font-size:10.5px;color:#9a9a9a;letter-spacing:-0.221px;">7</div>
<div class="t" style="left:1197.49px;width:600px;text-align:center;top:595.11px;font-size:10.5px;color:#9a9a9a;letter-spacing:-0.221px;">8</div>
<div class="t" style="left:1217.99px;width:600px;text-align:center;top:595.11px;font-size:10.5px;color:#9a9a9a;letter-spacing:-0.221px;">9</div>
</body></html>
